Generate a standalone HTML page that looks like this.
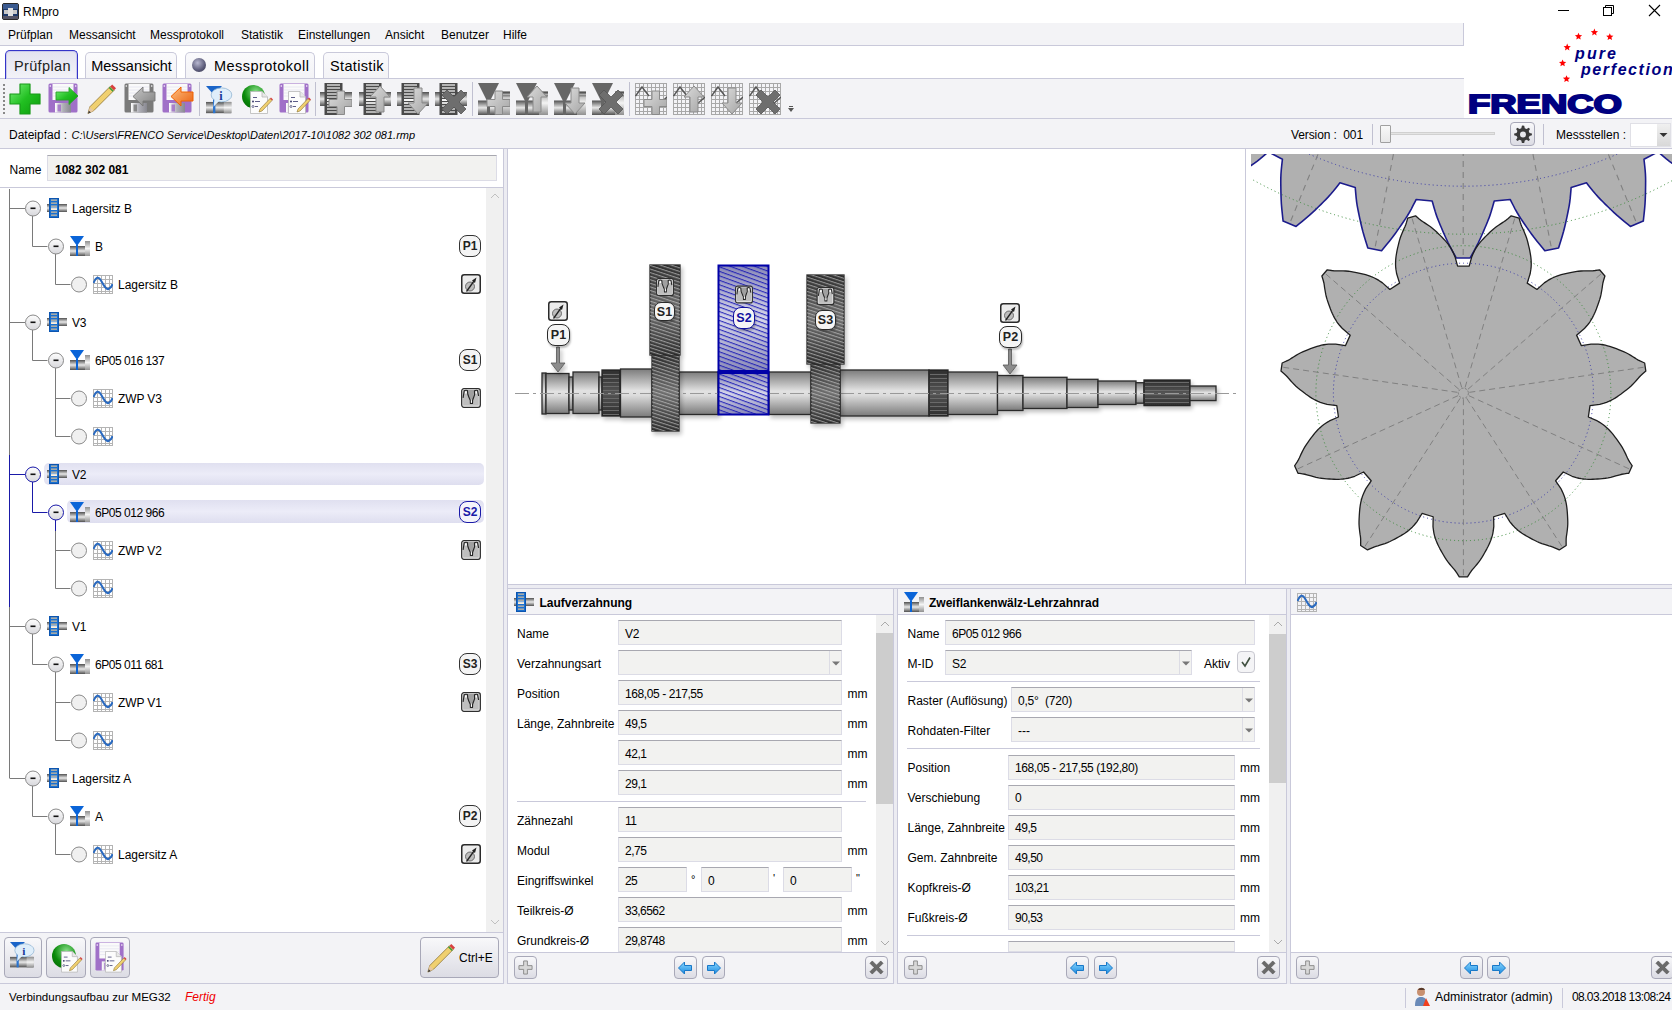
<!DOCTYPE html><html><head><meta charset="utf-8"><title>RMpro</title><style>
*{margin:0;padding:0;box-sizing:border-box}
html,body{width:1672px;height:1010px;overflow:hidden;background:#fff;font-family:"Liberation Sans",sans-serif;font-size:12px;color:#000}
.a{position:absolute}
.t{position:absolute;white-space:nowrap;line-height:1}
.inp{position:absolute;background:#f2f2f0;border:1px solid #dcdce6;border-top:1px solid #a8a8b0;height:25px}
.inp span{position:absolute;left:7px;top:6px;white-space:nowrap}
.hl{position:absolute;height:1px;background:#c8c8d8}
.vl{position:absolute;width:1px;background:#c8c8d8}
.btn{position:absolute;border:1px solid #a8a8b8;border-radius:4px;background:linear-gradient(#f8f8fa,#dcdce4)}
.bd{position:absolute;border:1px solid #333;border-radius:8px;background:#f4f4f4;font-weight:bold;font-size:12px;text-align:center;line-height:20px;color:#222}
.ic{position:absolute;overflow:visible}
</style></head><body>
<div class="a" style="left:0px;top:0px;width:1672px;height:23px;background:#fff"></div>
<svg class="ic" style="left:2px;top:3px" width="17" height="17" viewBox="0 0 17 17">
<rect x="0.5" y="0.5" width="16" height="16" rx="1.5" fill="#1e3a6a" stroke="#2a2a2a"/>
<rect x="1" y="1" width="15" height="5" fill="#3a5a90"/>
<rect x="2" y="7" width="13" height="4" fill="#c8c8c8"/><rect x="6" y="5" width="5" height="8" fill="#e0e0e0"/>
<rect x="1" y="13" width="15" height="3" fill="#556"/>
</svg>
<div class="t" style="left:23px;top:5.8px;font-size:12px;font-weight:normal;font-style:normal;color:#000;">RMpro</div>
<div class="a" style="left:1558px;top:10px;width:11px;height:1px;background:#000"></div>
<svg class="ic" style="left:1602px;top:4px" width="14" height="14" viewBox="0 0 14 14"><rect x="1.5" y="3.5" width="8" height="8" fill="none" stroke="#000"/><path d="M3.5 3.5V1.5H11.5V9.5H9.5" fill="none" stroke="#000"/></svg>
<svg class="ic" style="left:1648px;top:4px" width="13" height="13" viewBox="0 0 13 13"><path d="M1 1L12 12M12 1L1 12" stroke="#000" stroke-width="1.1"/></svg>
<div class="a" style="left:0px;top:23px;width:1463px;height:22px;background:#f3f3f6"></div>
<div class="a" style="left:0px;top:45px;width:1463px;height:1px;background:#c9c9da"></div>
<div class="t" style="left:8px;top:28.8px;font-size:12px;font-weight:normal;font-style:normal;color:#000;">Prüfplan</div>
<div class="t" style="left:69px;top:28.8px;font-size:12px;font-weight:normal;font-style:normal;color:#000;">Messansicht</div>
<div class="t" style="left:150px;top:28.8px;font-size:12px;font-weight:normal;font-style:normal;color:#000;">Messprotokoll</div>
<div class="t" style="left:241px;top:28.8px;font-size:12px;font-weight:normal;font-style:normal;color:#000;">Statistik</div>
<div class="t" style="left:298px;top:28.8px;font-size:12px;font-weight:normal;font-style:normal;color:#000;">Einstellungen</div>
<div class="t" style="left:385px;top:28.8px;font-size:12px;font-weight:normal;font-style:normal;color:#000;">Ansicht</div>
<div class="t" style="left:441px;top:28.8px;font-size:12px;font-weight:normal;font-style:normal;color:#000;">Benutzer</div>
<div class="t" style="left:503px;top:28.8px;font-size:12px;font-weight:normal;font-style:normal;color:#000;">Hilfe</div>
<div class="a" style="left:1463px;top:23px;width:1px;height:96px;background:#c9c9da"></div>
<div class="a" style="left:1464px;top:23px;width:208px;height:96px;background:#fff"></div>
<div class="a" style="left:0px;top:46px;width:1464px;height:33px;background:#fff"></div>
<div class="a" style="left:0px;top:78px;width:1464px;height:1px;background:#c9c9da"></div>
<div class="a" style="left:5px;top:50px;width:73px;height:29px;border:1px solid #3434c8;border-bottom:none;border-radius:5px 5px 0 0;background:linear-gradient(#e2e2f0,#f3f3f8);box-shadow:inset 0 0 0 1px #c8c8ec"></div>
<div class="a" style="left:85px;top:52px;width:92px;height:26px;border:1px solid #c9c9da;border-bottom:none;border-radius:5px 5px 0 0;background:linear-gradient(#fafafc,#f3f3f6)"></div>
<div class="a" style="left:185px;top:52px;width:130px;height:26px;border:1px solid #c9c9da;border-bottom:none;border-radius:5px 5px 0 0;background:linear-gradient(#fafafc,#f3f3f6)"></div>
<div class="a" style="left:323px;top:52px;width:66px;height:26px;border:1px solid #c9c9da;border-bottom:none;border-radius:5px 5px 0 0;background:linear-gradient(#fafafc,#f3f3f6)"></div>
<div class="t" style="left:14px;top:58.5px;font-size:14.5px;font-weight:normal;font-style:normal;color:#222;letter-spacing:0.35px">Prüfplan</div>
<div class="t" style="left:91.2px;top:58.5px;font-size:14.5px;font-weight:normal;font-style:normal;color:#000;">Messansicht</div>
<div class="t" style="left:214px;top:58.5px;font-size:14.5px;font-weight:normal;font-style:normal;color:#000;letter-spacing:0.45px">Messprotokoll</div>
<div class="t" style="left:330px;top:58.5px;font-size:14.5px;font-weight:normal;font-style:normal;color:#000;letter-spacing:0.35px">Statistik</div>
<div class="a" style="left:192px;top:58px;width:14px;height:14px;border-radius:7px;background:radial-gradient(circle at 40% 35%,#b8b8d0,#5a5a78 60%,#33334a)"></div>
<div class="a" style="left:0px;top:79px;width:1464px;height:39px;background:#f3f3f6"></div>
<div class="a" style="left:0px;top:118px;width:1672px;height:1px;background:#c9c9da"></div>
<div class="a" style="left:3px;top:84px;width:2px;height:30px;background:repeating-linear-gradient(#888 0 2px,transparent 2px 4px)"></div>
<div class="a" style="left:199px;top:82px;width:1px;height:34px;background:#c0c0d0"></div>
<div class="a" style="left:315px;top:82px;width:1px;height:34px;background:#c0c0d0"></div>
<div class="a" style="left:472px;top:82px;width:1px;height:34px;background:#c0c0d0"></div>
<div class="a" style="left:629px;top:82px;width:1px;height:34px;background:#c0c0d0"></div>
<div class="a" style="left:789px;top:106px;width:4px;height:1px;background:#555"></div>
<svg class="ic" style="left:787px;top:107px" width="8" height="6"><path d="M1 1H7L4 5Z" fill="#555"/></svg>
<div class="a" style="left:0px;top:119px;width:1672px;height:29px;background:#f3f3f6"></div>
<div class="a" style="left:0px;top:148px;width:1672px;height:1px;background:#c9c9da"></div>
<div class="t" style="left:9px;top:128.8px;font-size:12px;font-weight:normal;font-style:normal;color:#000;">Dateipfad :</div>
<div class="t" style="left:71.5px;top:129.8px;font-size:11px;font-weight:normal;font-style:italic;color:#000;">C:\Users\FRENCO Service\Desktop\Daten\2017-10\1082 302 081.rmp</div>
<div class="t" style="left:1291px;top:128.8px;font-size:12px;font-weight:normal;font-style:normal;color:#000;;letter-spacing:-0.098px">Version :&nbsp; 001</div>
<div class="a" style="left:1372px;top:124px;width:1px;height:21px;background:#c0c0d0"></div>
<div class="a" style="left:1390px;top:132px;width:105px;height:3px;background:#e4e4e4;border:1px solid #d0d0d0"></div>
<div class="a" style="left:1380px;top:125px;width:11px;height:18px;background:linear-gradient(#f8f8f8,#e8e8e8);border:1px solid #a0a0a0;border-radius:1px"></div>
<div class="a" style="left:1543px;top:124px;width:1px;height:21px;background:#c0c0d0"></div>
<div class="t" style="left:1556px;top:128.8px;font-size:12px;font-weight:normal;font-style:normal;color:#000;">Messstellen :</div>
<div class="a" style="left:1630px;top:123px;width:41px;height:24px;background:#fff;border:1px solid #e0e0e6"></div>
<div class="a" style="left:1657px;top:124px;width:13px;height:22px;background:linear-gradient(#f0f0f0,#d8d8d8)"></div>
<svg class="ic" style="left:1659px;top:132px" width="9" height="6"><path d="M0.5 1H8.5L4.5 5Z" fill="#333"/></svg>
<svg class="ic" style="left:1464px;top:23px" width="207" height="95" viewBox="0 0 207 95">
<polygon points="114.50,9.70 115.51,12.12 118.11,12.33 116.13,14.03 116.73,16.57 114.50,15.21 112.27,16.57 112.87,14.03 110.89,12.33 113.49,12.12" fill="#f00"/><polygon points="130.40,5.60 131.41,8.02 134.01,8.23 132.03,9.93 132.63,12.47 130.40,11.11 128.17,12.47 128.77,9.93 126.79,8.23 129.39,8.02" fill="#f00"/><polygon points="145.80,10.20 146.81,12.62 149.41,12.83 147.43,14.53 148.03,17.07 145.80,15.71 143.57,17.07 144.17,14.53 142.19,12.83 144.79,12.62" fill="#f00"/><polygon points="103.20,20.60 104.21,23.02 106.81,23.23 104.83,24.93 105.43,27.47 103.20,26.11 100.97,27.47 101.57,24.93 99.59,23.23 102.19,23.02" fill="#f00"/><polygon points="98.60,36.40 99.61,38.82 102.21,39.03 100.23,40.73 100.83,43.27 98.60,41.91 96.37,43.27 96.97,40.73 94.99,39.03 97.59,38.82" fill="#f00"/><polygon points="102.50,52.20 103.51,54.62 106.11,54.83 104.13,56.53 104.73,59.07 102.50,57.71 100.27,59.07 100.87,56.53 98.89,54.83 101.49,54.62" fill="#f00"/>
<text x="111" y="35.7" font-family="Liberation Sans" font-weight="bold" font-style="italic" font-size="16" fill="#000080" textLength="41" lengthAdjust="spacing">pure</text>
<text x="117" y="51.5" font-family="Liberation Sans" font-weight="bold" font-style="italic" font-size="16" fill="#000080" letter-spacing="1.6">perfection</text>
<text x="4" y="90.2" font-family="Liberation Sans" font-weight="900" font-size="25.5" fill="#000080" textLength="154" lengthAdjust="spacingAndGlyphs" stroke="#000080" stroke-width="1.8">FRENCO</text>
</svg>

<svg width="0" height="0" style="position:absolute">
<defs>
<linearGradient id="gShaft" x1="0" y1="0" x2="0" y2="1"><stop offset="0" stop-color="#505050"/><stop offset="0.5" stop-color="#e8e8e8"/><stop offset="1" stop-color="#505050"/></linearGradient>
<linearGradient id="gShaftL" x1="0" y1="0" x2="0" y2="1"><stop offset="0" stop-color="#909090"/><stop offset="0.5" stop-color="#f4f4f4"/><stop offset="1" stop-color="#909090"/></linearGradient>
<linearGradient id="gCirc" x1="0" y1="0" x2="0" y2="1"><stop offset="0" stop-color="#fdfdfd"/><stop offset="1" stop-color="#d8d8dc"/></linearGradient>
<symbol id="iGear" viewBox="0 0 20 20">
<rect x="0" y="6" width="20" height="8" fill="url(#gShaft)"/>
<rect x="2" y="0" width="10" height="20" fill="#0c55b0"/>
<rect x="3" y="1" width="8" height="18" fill="#1a70d0"/>
<g fill="#c8b8a0"><rect x="4" y="1.5" width="6" height="1.3"/><rect x="4" y="4.5" width="6" height="1.3"/><rect x="4" y="7.5" width="6" height="1.3"/><rect x="4" y="13.5" width="6" height="1.3"/><rect x="4" y="16.5" width="6" height="1.3"/></g>
<g fill="#fff0dc"><rect x="4" y="9.5" width="6" height="1.3"/><rect x="4" y="10.7" width="6" height="1.3"/></g>
</symbol>
<symbol id="iV" viewBox="0 0 20 20">
<rect x="0" y="10" width="15" height="10" fill="url(#gShaft)"/>
<g fill="#bbb"><rect x="15" y="5" width="5" height="15" fill="url(#gShaftL)"/></g>
<path d="M0 0H14L7 10Z" fill="#0a64d8"/>
<rect x="6" y="9" width="2" height="11" fill="#0a64d8"/>
</symbol>
<symbol id="iSine" viewBox="0 0 20 20">
<g stroke="#b4b4b4" stroke-width="1"><path d="M0.5 1V20M4.5 1V20M8.5 1V20M12.5 1V20M16.5 1V20M19.5 1V20M0 1.5H20M0 5.5H20M0 9.5H20M0 13.5H20M0 17.5H20M0 19.5H20"/></g>
<path d="M0.5 9C3 3 5.5 2 8 6.5S13 16 15.5 15S19 12 19.5 10" fill="none" stroke="#2a6ac0" stroke-width="2"/>
</symbol>
<symbol id="iDia" viewBox="0 0 20 20">
<rect x="0.75" y="0.75" width="18.5" height="18.5" rx="2.5" fill="#ececec" stroke="#2a2a2a" stroke-width="1.5"/>
<circle cx="9" cy="12.5" r="4.5" fill="#bdbdbd" stroke="#555" stroke-width="0.8"/>
<path d="M5.5 17.5L13 7" stroke="#222" stroke-width="1.3"/><path d="M15.5 3.5L11 6.5L14 9Z" fill="#222"/>
</symbol>
<symbol id="iVprof" viewBox="0 0 20 20">
<rect x="0.7" y="0.7" width="18.6" height="18.6" rx="2.2" fill="#f6f6f6" stroke="#2e2e2e" stroke-width="1.3"/>
<rect x="2.1" y="2.1" width="15.7" height="15.6" fill="#bebebe"/>
<path d="M6.5 2.1H13.4L12 11H8Z" fill="#a0a0a0"/>
<path d="M2.1 9.8L3.2 2.8Q4.8 1.8 6.4 2.6L6.8 6.3L7.8 9L8.8 11.4L9.3 12.2L9.4 15.4H11.5L11.6 12.2L12.6 9.5L13.6 6.8L13.5 2.8Q15 1.8 16.6 2.6L17.6 8" fill="none" stroke="#262626" stroke-width="1.15" stroke-linejoin="round"/>
<path d="M3.8 5.6L4.4 3.2H5.6L5.8 5.6Z" fill="#fff"/><path d="M14.5 5.6L14.6 3.2H15.7L16.1 5.6Z" fill="#fff"/><rect x="9.9" y="12.4" width="1.1" height="2.4" fill="#fff"/>
</symbol>
</defs></svg>

<div class="a" style="left:0px;top:149px;width:503px;height:783px;background:#fff"></div>
<div class="t" style="left:9.5px;top:163.8px;font-size:12px;font-weight:normal;font-style:normal;color:#000;">Name</div>
<div class="inp" style="left:47px;top:155px;width:450px;height:26px"></div>
<div class="t" style="left:55px;top:163.8px;font-size:12px;font-weight:bold;font-style:normal;color:#000;">1082 302 081</div>
<div class="a" style="left:0px;top:187px;width:503px;height:1px;background:#c9c9da"></div>
<div class="a" style="left:486px;top:188px;width:17px;height:744px;background:#f0f0f0"></div>
<svg class="ic" style="left:490px;top:193px" width="10" height="6"><path d="M1 5L5 1L9 5" fill="none" stroke="#c0c0c0" stroke-width="1"/></svg>
<svg class="ic" style="left:490px;top:919px" width="10" height="6"><path d="M1 1L5 5L9 1" fill="none" stroke="#c0c0c0" stroke-width="1"/></svg>
<div class="a" style="left:503px;top:149px;width:1px;height:835px;background:#c9c9da"></div>
<div class="a" style="left:504px;top:149px;width:3px;height:835px;background:#ececf2"></div>
<div class="a" style="left:507px;top:149px;width:1px;height:835px;background:#c9c9da"></div>
<div class="a" style="left:44px;top:463px;width:440px;height:22px;border-radius:5px;background:linear-gradient(#e0e0f0,#ececf8 50%,#dedeef)"></div>
<div class="a" style="left:67px;top:500px;width:417px;height:23px;border-radius:5px;background:linear-gradient(#e0e0f0,#ececf8 50%,#dedeef)"></div>
<svg class="ic" style="left:0;top:188px" width="120" height="700" viewBox="0 188 120 700"><path d="M9.5 189L9.5 455" stroke="#7a7a7a" stroke-width="1" fill="none"/><path d="M9.5 455L9.5 607" stroke="#1a1aa8" stroke-width="1" fill="none"/><path d="M9.5 607L9.5 778.5" stroke="#7a7a7a" stroke-width="1" fill="none"/><path d="M10 208.5L25 208.5" stroke="#7a7a7a" stroke-width="1" fill="none"/><path d="M10 322.5L25 322.5" stroke="#7a7a7a" stroke-width="1" fill="none"/><path d="M10 474.5L25 474.5" stroke="#1a1aa8" stroke-width="1" fill="none"/><path d="M10 626.5L25 626.5" stroke="#7a7a7a" stroke-width="1" fill="none"/><path d="M10 778.5L25 778.5" stroke="#7a7a7a" stroke-width="1" fill="none"/><path d="M32.5 216L32.5 246.5" stroke="#7a7a7a" stroke-width="1" fill="none"/><path d="M32.5 246.5L47.5 246.5" stroke="#7a7a7a" stroke-width="1" fill="none"/><path d="M55.5 254L55.5 284.5" stroke="#7a7a7a" stroke-width="1" fill="none"/><path d="M55.5 284.5L70.5 284.5" stroke="#7a7a7a" stroke-width="1" fill="none"/><path d="M32.5 330L32.5 360.5" stroke="#7a7a7a" stroke-width="1" fill="none"/><path d="M32.5 360.5L47.5 360.5" stroke="#7a7a7a" stroke-width="1" fill="none"/><path d="M55.5 368L55.5 436.5" stroke="#7a7a7a" stroke-width="1" fill="none"/><path d="M55.5 398.5L70.5 398.5" stroke="#7a7a7a" stroke-width="1" fill="none"/><path d="M55.5 436.5L70.5 436.5" stroke="#7a7a7a" stroke-width="1" fill="none"/><path d="M32.5 482L32.5 512.5" stroke="#1a1aa8" stroke-width="1" fill="none"/><path d="M32.5 512.5L47.5 512.5" stroke="#1a1aa8" stroke-width="1" fill="none"/><path d="M55.5 520L55.5 531" stroke="#1a1aa8" stroke-width="1" fill="none"/><path d="M55.5 531L55.5 588.5" stroke="#7a7a7a" stroke-width="1" fill="none"/><path d="M55.5 550.5L70.5 550.5" stroke="#7a7a7a" stroke-width="1" fill="none"/><path d="M55.5 588.5L70.5 588.5" stroke="#7a7a7a" stroke-width="1" fill="none"/><path d="M32.5 634L32.5 664.5" stroke="#7a7a7a" stroke-width="1" fill="none"/><path d="M32.5 664.5L47.5 664.5" stroke="#7a7a7a" stroke-width="1" fill="none"/><path d="M55.5 672L55.5 740.5" stroke="#7a7a7a" stroke-width="1" fill="none"/><path d="M55.5 702.5L70.5 702.5" stroke="#7a7a7a" stroke-width="1" fill="none"/><path d="M55.5 740.5L70.5 740.5" stroke="#7a7a7a" stroke-width="1" fill="none"/><path d="M32.5 786L32.5 816.5" stroke="#7a7a7a" stroke-width="1" fill="none"/><path d="M32.5 816.5L47.5 816.5" stroke="#7a7a7a" stroke-width="1" fill="none"/><path d="M55.5 824L55.5 854.5" stroke="#7a7a7a" stroke-width="1" fill="none"/><path d="M55.5 854.5L70.5 854.5" stroke="#7a7a7a" stroke-width="1" fill="none"/><circle cx="33" cy="208.5" r="7.5" fill="url(#gCirc)" stroke="#8a8a8a" stroke-width="1"/><rect x="30.5" y="207.5" width="5" height="1.6" fill="#111"/><circle cx="56" cy="246.5" r="7.5" fill="url(#gCirc)" stroke="#8a8a8a" stroke-width="1"/><rect x="53.5" y="245.5" width="5" height="1.6" fill="#111"/><circle cx="79" cy="284.5" r="7.5" fill="#f0f0f0" stroke="#8a8a8a" stroke-width="1"/><circle cx="33" cy="322.5" r="7.5" fill="url(#gCirc)" stroke="#8a8a8a" stroke-width="1"/><rect x="30.5" y="321.5" width="5" height="1.6" fill="#111"/><circle cx="56" cy="360.5" r="7.5" fill="url(#gCirc)" stroke="#8a8a8a" stroke-width="1"/><rect x="53.5" y="359.5" width="5" height="1.6" fill="#111"/><circle cx="79" cy="398.5" r="7.5" fill="#f0f0f0" stroke="#8a8a8a" stroke-width="1"/><circle cx="79" cy="436.5" r="7.5" fill="#f0f0f0" stroke="#8a8a8a" stroke-width="1"/><circle cx="33" cy="474.5" r="7.5" fill="url(#gCirc)" stroke="#1a1aa8" stroke-width="1"/><rect x="30.5" y="473.5" width="5" height="1.6" fill="#111"/><circle cx="56" cy="512.5" r="7.5" fill="url(#gCirc)" stroke="#1a1aa8" stroke-width="1"/><rect x="53.5" y="511.5" width="5" height="1.6" fill="#111"/><circle cx="79" cy="550.5" r="7.5" fill="#f0f0f0" stroke="#8a8a8a" stroke-width="1"/><circle cx="79" cy="588.5" r="7.5" fill="#f0f0f0" stroke="#8a8a8a" stroke-width="1"/><circle cx="33" cy="626.5" r="7.5" fill="url(#gCirc)" stroke="#8a8a8a" stroke-width="1"/><rect x="30.5" y="625.5" width="5" height="1.6" fill="#111"/><circle cx="56" cy="664.5" r="7.5" fill="url(#gCirc)" stroke="#8a8a8a" stroke-width="1"/><rect x="53.5" y="663.5" width="5" height="1.6" fill="#111"/><circle cx="79" cy="702.5" r="7.5" fill="#f0f0f0" stroke="#8a8a8a" stroke-width="1"/><circle cx="79" cy="740.5" r="7.5" fill="#f0f0f0" stroke="#8a8a8a" stroke-width="1"/><circle cx="33" cy="778.5" r="7.5" fill="url(#gCirc)" stroke="#8a8a8a" stroke-width="1"/><rect x="30.5" y="777.5" width="5" height="1.6" fill="#111"/><circle cx="56" cy="816.5" r="7.5" fill="url(#gCirc)" stroke="#8a8a8a" stroke-width="1"/><rect x="53.5" y="815.5" width="5" height="1.6" fill="#111"/><circle cx="79" cy="854.5" r="7.5" fill="#f0f0f0" stroke="#8a8a8a" stroke-width="1"/></svg>
<svg class="ic" style="left:47px;top:198px" width="20" height="20"><use href="#iGear"/></svg>
<div class="t" style="left:72px;top:202.8px;font-size:12px;font-weight:normal;font-style:normal;color:#000;">Lagersitz B</div>
<svg class="ic" style="left:70px;top:236px" width="20" height="20"><use href="#iV"/></svg>
<div class="t" style="left:95px;top:240.8px;font-size:12px;font-weight:normal;font-style:normal;color:#000;">B</div>
<div class="bd" style="left:459px;top:235px;width:22px;height:22px;">P1</div>
<svg class="ic" style="left:93px;top:274px" width="20" height="20"><use href="#iSine"/></svg>
<div class="t" style="left:118px;top:278.8px;font-size:12px;font-weight:normal;font-style:normal;color:#000;">Lagersitz B</div>
<svg class="ic" style="left:461px;top:274px" width="20" height="20"><use href="#iDia"/></svg>
<svg class="ic" style="left:47px;top:312px" width="20" height="20"><use href="#iGear"/></svg>
<div class="t" style="left:72px;top:316.8px;font-size:12px;font-weight:normal;font-style:normal;color:#000;;letter-spacing:-0.310px">V3</div>
<svg class="ic" style="left:70px;top:350px" width="20" height="20"><use href="#iV"/></svg>
<div class="t" style="left:95px;top:354.8px;font-size:12px;font-weight:normal;font-style:normal;color:#000;;letter-spacing:-0.465px">6P05 016 137</div>
<div class="bd" style="left:459px;top:349px;width:22px;height:22px;">S1</div>
<svg class="ic" style="left:93px;top:388px" width="20" height="20"><use href="#iSine"/></svg>
<div class="t" style="left:118px;top:392.8px;font-size:12px;font-weight:normal;font-style:normal;color:#000;;letter-spacing:-0.103px">ZWP V3</div>
<svg class="ic" style="left:461px;top:388px" width="20" height="20"><use href="#iVprof"/></svg>
<svg class="ic" style="left:93px;top:426px" width="20" height="20"><use href="#iSine"/></svg>
<svg class="ic" style="left:47px;top:464px" width="20" height="20"><use href="#iGear"/></svg>
<div class="t" style="left:72px;top:468.8px;font-size:12px;font-weight:normal;font-style:normal;color:#000;;letter-spacing:-0.310px">V2</div>
<svg class="ic" style="left:70px;top:502px" width="20" height="20"><use href="#iV"/></svg>
<div class="t" style="left:95px;top:506.8px;font-size:12px;font-weight:normal;font-style:normal;color:#000;;letter-spacing:-0.465px">6P05 012 966</div>
<div class="bd" style="left:459px;top:501px;width:22px;height:22px;border-color:#1a1aa8;color:#1a1aa8;background:#f4f4fa">S2</div>
<svg class="ic" style="left:93px;top:540px" width="20" height="20"><use href="#iSine"/></svg>
<div class="t" style="left:118px;top:544.8px;font-size:12px;font-weight:normal;font-style:normal;color:#000;;letter-spacing:-0.103px">ZWP V2</div>
<svg class="ic" style="left:461px;top:540px" width="20" height="20"><use href="#iVprof"/></svg>
<svg class="ic" style="left:93px;top:578px" width="20" height="20"><use href="#iSine"/></svg>
<svg class="ic" style="left:47px;top:616px" width="20" height="20"><use href="#iGear"/></svg>
<div class="t" style="left:72px;top:620.8px;font-size:12px;font-weight:normal;font-style:normal;color:#000;;letter-spacing:-0.310px">V1</div>
<svg class="ic" style="left:70px;top:654px" width="20" height="20"><use href="#iV"/></svg>
<div class="t" style="left:95px;top:658.8px;font-size:12px;font-weight:normal;font-style:normal;color:#000;;letter-spacing:-0.465px">6P05 011 681</div>
<div class="bd" style="left:459px;top:653px;width:22px;height:22px;">S3</div>
<svg class="ic" style="left:93px;top:692px" width="20" height="20"><use href="#iSine"/></svg>
<div class="t" style="left:118px;top:696.8px;font-size:12px;font-weight:normal;font-style:normal;color:#000;;letter-spacing:-0.103px">ZWP V1</div>
<svg class="ic" style="left:461px;top:692px" width="20" height="20"><use href="#iVprof"/></svg>
<svg class="ic" style="left:93px;top:730px" width="20" height="20"><use href="#iSine"/></svg>
<svg class="ic" style="left:47px;top:768px" width="20" height="20"><use href="#iGear"/></svg>
<div class="t" style="left:72px;top:772.8px;font-size:12px;font-weight:normal;font-style:normal;color:#000;">Lagersitz A</div>
<svg class="ic" style="left:70px;top:806px" width="20" height="20"><use href="#iV"/></svg>
<div class="t" style="left:95px;top:810.8px;font-size:12px;font-weight:normal;font-style:normal;color:#000;">A</div>
<div class="bd" style="left:459px;top:805px;width:22px;height:22px;">P2</div>
<svg class="ic" style="left:93px;top:844px" width="20" height="20"><use href="#iSine"/></svg>
<div class="t" style="left:118px;top:848.8px;font-size:12px;font-weight:normal;font-style:normal;color:#000;">Lagersitz A</div>
<svg class="ic" style="left:461px;top:844px" width="20" height="20"><use href="#iDia"/></svg>
<div class="a" style="left:0px;top:932px;width:503px;height:1px;background:#c9c9da"></div>
<div class="a" style="left:0px;top:933px;width:503px;height:50px;background:#f3f3f6"></div>
<div class="a" style="left:0px;top:983px;width:503px;height:1px;background:#c9c9da"></div>
<div class="a" style="left:508px;top:149px;width:737px;height:435px;background:#fff"></div>
<div class="a" style="left:1245px;top:149px;width:1px;height:435px;background:#c9c9da"></div>
<div class="a" style="left:1246px;top:149px;width:426px;height:435px;background:#fff"></div>
<svg class="ic" style="left:1251px;top:154px;overflow:hidden" width="421" height="430" viewBox="1251 154 421 430">
<path d="M1159.70 63.92 L1159.70 63.92 L1158.42 66.27 L1156.58 69.63 L1154.57 73.40 L1152.79 76.95 L1151.34 80.12 L1150.02 83.24 L1148.73 86.42 L1147.41 89.78 L1146.00 93.36 L1144.58 97.10 L1143.16 100.96 L1141.81 104.88 L1140.41 109.30 L1139.00 114.08 L1137.76 118.38 L1136.89 121.38 L1146.87 131.21 L1149.85 130.29 L1154.14 128.99 L1158.90 127.50 L1163.29 126.04 L1167.19 124.62 L1171.03 123.15 L1174.74 121.66 L1178.31 120.21 L1181.65 118.83 L1184.81 117.50 L1187.90 116.12 L1191.05 114.63 L1194.57 112.79 L1198.31 110.72 L1201.65 108.83 L1203.97 107.52 L1203.97 107.52 L1216.41 117.59 L1216.41 117.59 L1215.61 120.13 L1214.46 123.79 L1213.21 127.88 L1212.15 131.71 L1211.34 135.10 L1210.64 138.41 L1209.99 141.78 L1209.34 145.33 L1208.66 149.12 L1207.98 153.06 L1207.34 157.12 L1206.77 161.24 L1206.25 165.83 L1205.79 170.80 L1205.40 175.26 L1205.13 178.37 L1216.82 186.08 L1219.57 184.61 L1223.53 182.50 L1227.90 180.12 L1231.93 177.84 L1235.49 175.70 L1238.97 173.51 L1242.33 171.33 L1245.54 169.22 L1248.55 167.22 L1251.40 165.30 L1254.17 163.36 L1256.96 161.28 L1260.06 158.80 L1263.33 156.05 L1266.24 153.54 L1268.27 151.81 L1268.27 151.81 L1282.42 159.28 L1282.42 159.28 L1282.13 161.94 L1281.70 165.75 L1281.27 170.00 L1280.97 173.96 L1280.83 177.44 L1280.78 180.83 L1280.80 184.26 L1280.85 187.87 L1280.91 191.72 L1281.01 195.72 L1281.16 199.83 L1281.39 203.97 L1281.78 208.59 L1282.28 213.54 L1282.76 218.00 L1283.10 221.10 L1296.06 226.41 L1298.47 224.44 L1301.94 221.60 L1305.78 218.42 L1309.29 215.40 L1312.37 212.61 L1315.36 209.80 L1318.23 207.01 L1320.98 204.31 L1323.55 201.77 L1325.97 199.34 L1328.31 196.90 L1330.65 194.32 L1333.21 191.28 L1335.89 187.95 L1338.26 184.94 L1339.92 182.84 L1339.92 182.84 L1355.24 187.44 L1355.24 187.44 L1355.47 190.10 L1355.79 193.93 L1356.19 198.18 L1356.65 202.12 L1357.19 205.57 L1357.80 208.90 L1358.48 212.26 L1359.22 215.80 L1360.03 219.56 L1360.89 223.47 L1361.84 227.46 L1362.87 231.49 L1364.14 235.94 L1365.59 240.71 L1366.92 244.99 L1367.85 247.96 L1381.59 250.67 L1383.58 248.27 L1386.44 244.81 L1389.59 240.95 L1392.45 237.31 L1394.93 233.98 L1397.32 230.64 L1399.60 227.35 L1401.77 224.18 L1403.80 221.19 L1405.71 218.33 L1407.53 215.48 L1409.33 212.50 L1411.26 209.03 L1413.24 205.24 L1414.99 201.82 L1416.21 199.45 L1416.21 199.45 L1432.13 201.00 L1432.13 201.00 L1432.87 203.57 L1433.92 207.26 L1435.13 211.35 L1436.35 215.13 L1437.54 218.41 L1438.79 221.56 L1440.10 224.73 L1441.52 228.05 L1443.03 231.59 L1444.64 235.25 L1446.34 238.99 L1448.13 242.74 L1450.23 246.86 L1452.58 251.26 L1454.71 255.20 L1456.20 257.95 L1470.20 257.95 L1471.69 255.20 L1473.82 251.26 L1476.17 246.86 L1478.27 242.74 L1480.06 238.99 L1481.76 235.25 L1483.37 231.59 L1484.88 228.05 L1486.30 224.73 L1487.61 221.56 L1488.86 218.41 L1490.05 215.13 L1491.27 211.35 L1492.48 207.26 L1493.53 203.57 L1494.27 201.00 L1494.27 201.00 L1510.19 199.45 L1510.19 199.45 L1511.41 201.82 L1513.16 205.24 L1515.14 209.03 L1517.07 212.50 L1518.87 215.48 L1520.69 218.33 L1522.60 221.19 L1524.63 224.18 L1526.80 227.35 L1529.08 230.64 L1531.47 233.98 L1533.95 237.31 L1536.81 240.95 L1539.96 244.81 L1542.82 248.27 L1544.81 250.67 L1558.55 247.96 L1559.48 244.99 L1560.81 240.71 L1562.26 235.94 L1563.53 231.49 L1564.56 227.46 L1565.51 223.47 L1566.37 219.56 L1567.18 215.80 L1567.92 212.26 L1568.60 208.90 L1569.21 205.57 L1569.75 202.12 L1570.21 198.18 L1570.61 193.93 L1570.93 190.10 L1571.16 187.44 L1571.16 187.44 L1586.48 182.84 L1586.48 182.84 L1588.14 184.94 L1590.51 187.95 L1593.19 191.28 L1595.75 194.32 L1598.09 196.90 L1600.43 199.34 L1602.85 201.77 L1605.42 204.31 L1608.17 207.01 L1611.04 209.80 L1614.03 212.61 L1617.11 215.40 L1620.62 218.42 L1624.46 221.60 L1627.93 224.44 L1630.34 226.41 L1643.30 221.10 L1643.64 218.00 L1644.12 213.54 L1644.62 208.59 L1645.01 203.97 L1645.24 199.83 L1645.39 195.72 L1645.49 191.72 L1645.55 187.87 L1645.60 184.26 L1645.62 180.83 L1645.57 177.44 L1645.43 173.96 L1645.13 170.00 L1644.70 165.75 L1644.27 161.94 L1643.98 159.28 L1643.98 159.28 L1658.13 151.81 L1658.13 151.81 L1660.16 153.54 L1663.07 156.05 L1666.34 158.80 L1669.44 161.28 L1672.23 163.36 L1675.00 165.30 L1677.85 167.22 L1680.86 169.22 L1684.07 171.33 L1687.43 173.51 L1690.91 175.70 L1694.47 177.84 L1698.50 180.12 L1702.87 182.50 L1706.83 184.61 L1709.58 186.08 L1721.27 178.37 L1721.00 175.26 L1720.61 170.80 L1720.15 165.83 L1719.63 161.24 L1719.06 157.12 L1718.42 153.06 L1717.74 149.12 L1717.06 145.33 L1716.41 141.78 L1715.76 138.41 L1715.06 135.10 L1714.25 131.71 L1713.19 127.88 L1711.94 123.79 L1710.79 120.13 L1709.99 117.59 L1709.99 117.59 L1722.43 107.52 L1722.43 107.52 L1724.75 108.83 L1728.09 110.72 L1731.83 112.79 L1735.35 114.63 L1738.50 116.12 L1741.59 117.50 L1744.75 118.83 L1748.09 120.21 L1751.66 121.66 L1755.37 123.15 L1759.21 124.62 L1763.11 126.04 L1767.50 127.50 L1772.26 128.99 L1776.55 130.29 L1779.53 131.21 L1789.51 121.38 L1788.64 118.38 L1787.40 114.08 L1785.99 109.30 L1784.59 104.88 L1783.24 100.96 L1781.82 97.10 L1780.40 93.36 L1778.99 89.78 L1777.67 86.42 L1776.38 83.24 L1775.06 80.12 L1773.61 76.95 L1771.83 73.40 L1769.82 69.63 L1767.98 66.27 L1766.70 63.92 L1766.70 63.92Z" fill="#b0b0b0"/>
<path d="M1433.17 516.75 L1433.00 526.58 L1433.22 528.39 L1433.55 530.97 L1434.00 533.55 L1434.59 535.89 L1435.31 538.23 L1436.10 540.49 L1436.96 542.63 L1437.91 544.70 L1438.91 546.76 L1439.97 548.82 L1441.09 550.88 L1442.30 553.01 L1443.61 555.30 L1445.01 557.66 L1446.49 559.94 L1448.10 562.13 L1449.79 564.23 L1451.39 566.18 L1452.84 567.86 L1454.19 569.39 L1455.51 571.03 L1456.94 573.13 L1458.33 575.34 L1459.30 576.90 L1467.50 576.90 L1468.47 575.34 L1469.86 573.13 L1471.29 571.03 L1472.61 569.39 L1473.96 567.86 L1475.41 566.18 L1477.01 564.23 L1478.70 562.13 L1480.31 559.94 L1481.79 557.66 L1483.19 555.30 L1484.50 553.01 L1485.71 550.88 L1486.83 548.82 L1487.89 546.76 L1488.89 544.70 L1489.84 542.63 L1490.70 540.49 L1491.49 538.23 L1492.21 535.89 L1492.80 533.55 L1493.25 530.97 L1493.58 528.39 L1493.80 526.58 L1493.63 516.75 L1504.76 513.49 L1509.94 521.84 L1511.10 523.25 L1512.77 525.24 L1514.55 527.17 L1516.31 528.82 L1518.18 530.39 L1520.07 531.87 L1521.95 533.20 L1523.86 534.43 L1525.82 535.62 L1527.83 536.78 L1529.88 537.91 L1532.05 539.05 L1534.39 540.26 L1536.85 541.49 L1539.33 542.62 L1541.86 543.58 L1544.42 544.44 L1546.82 545.21 L1548.94 545.85 L1550.91 546.39 L1552.90 547.06 L1555.24 548.06 L1557.61 549.17 L1559.26 549.96 L1566.17 545.52 L1566.14 543.68 L1566.11 541.07 L1566.18 538.53 L1566.40 536.44 L1566.72 534.43 L1567.02 532.23 L1567.32 529.73 L1567.60 527.04 L1567.77 524.33 L1567.78 521.61 L1567.68 518.87 L1567.55 516.24 L1567.41 513.79 L1567.24 511.45 L1567.02 509.14 L1566.75 506.86 L1566.43 504.62 L1566.00 502.35 L1565.44 500.02 L1564.78 497.67 L1564.01 495.38 L1563.00 492.96 L1561.88 490.61 L1561.09 488.97 L1555.63 480.80 L1563.23 472.03 L1572.10 476.26 L1573.83 476.81 L1576.32 477.59 L1578.86 478.25 L1581.23 478.68 L1583.65 479.00 L1586.04 479.22 L1588.35 479.32 L1590.62 479.32 L1592.91 479.26 L1595.22 479.16 L1597.56 478.99 L1600.01 478.78 L1602.63 478.54 L1605.36 478.24 L1608.05 477.85 L1610.71 477.29 L1613.32 476.63 L1615.76 475.98 L1617.89 475.37 L1619.84 474.77 L1621.88 474.25 L1624.38 473.82 L1626.97 473.48 L1628.80 473.25 L1632.21 465.78 L1631.19 464.25 L1629.75 462.07 L1628.43 459.90 L1627.49 458.02 L1626.67 456.15 L1625.74 454.14 L1624.63 451.87 L1623.42 449.46 L1622.10 447.09 L1620.64 444.79 L1619.07 442.54 L1617.54 440.40 L1616.10 438.41 L1614.69 436.54 L1613.26 434.72 L1611.80 432.94 L1610.31 431.23 L1608.72 429.56 L1606.99 427.89 L1605.17 426.27 L1603.28 424.76 L1601.12 423.28 L1598.91 421.91 L1597.36 420.95 L1588.35 417.02 L1590.00 405.54 L1599.75 404.31 L1601.51 403.84 L1604.02 403.14 L1606.51 402.32 L1608.74 401.41 L1610.95 400.37 L1613.08 399.26 L1615.07 398.10 L1616.98 396.87 L1618.88 395.58 L1620.77 394.24 L1622.65 392.84 L1624.59 391.34 L1626.67 389.72 L1628.80 387.99 L1630.85 386.21 L1632.79 384.30 L1634.63 382.33 L1636.33 380.46 L1637.79 378.80 L1639.10 377.24 L1640.54 375.70 L1642.41 373.99 L1644.41 372.30 L1645.82 371.12 L1644.65 362.99 L1642.97 362.26 L1640.57 361.20 L1638.29 360.08 L1636.48 359.01 L1634.78 357.89 L1632.91 356.70 L1630.76 355.39 L1628.43 354.02 L1626.04 352.73 L1623.57 351.60 L1621.03 350.55 L1618.58 349.57 L1616.30 348.68 L1614.10 347.86 L1611.91 347.11 L1609.73 346.41 L1607.55 345.77 L1605.31 345.22 L1602.96 344.75 L1600.54 344.38 L1598.14 344.13 L1595.52 344.05 L1592.92 344.09 L1591.10 344.13 L1581.39 345.69 L1576.58 335.14 L1584.11 328.83 L1585.33 327.48 L1587.07 325.54 L1588.72 323.51 L1590.11 321.53 L1591.40 319.46 L1592.59 317.38 L1593.64 315.32 L1594.59 313.26 L1595.49 311.15 L1596.35 309.00 L1597.17 306.80 L1597.99 304.49 L1598.86 302.00 L1599.73 299.40 L1600.49 296.78 L1601.08 294.14 L1601.57 291.48 L1601.99 288.99 L1602.32 286.80 L1602.58 284.78 L1602.96 282.71 L1603.61 280.26 L1604.38 277.76 L1604.92 276.00 L1599.55 269.80 L1597.73 270.09 L1595.15 270.49 L1592.63 270.79 L1590.52 270.86 L1588.48 270.84 L1586.27 270.85 L1583.75 270.91 L1581.05 271.01 L1578.35 271.23 L1575.65 271.61 L1572.95 272.09 L1570.36 272.60 L1567.96 273.08 L1565.67 273.58 L1563.42 274.13 L1561.20 274.72 L1559.02 275.36 L1556.84 276.11 L1554.61 276.99 L1552.38 277.98 L1550.22 279.07 L1547.97 280.42 L1545.80 281.86 L1544.29 282.88 L1536.98 289.44 L1527.22 283.17 L1530.15 273.79 L1530.45 271.99 L1530.86 269.42 L1531.15 266.81 L1531.24 264.40 L1531.21 261.96 L1531.09 259.57 L1530.86 257.27 L1530.54 255.02 L1530.16 252.76 L1529.72 250.48 L1529.23 248.19 L1528.67 245.80 L1528.05 243.24 L1527.38 240.58 L1526.60 237.97 L1525.67 235.42 L1524.64 232.93 L1523.65 230.61 L1522.74 228.59 L1521.87 226.74 L1521.07 224.80 L1520.29 222.38 L1519.58 219.87 L1519.09 218.09 L1511.22 215.78 L1509.85 217.01 L1507.89 218.74 L1505.93 220.36 L1504.20 221.56 L1502.47 222.64 L1500.62 223.84 L1498.53 225.26 L1496.31 226.81 L1494.15 228.45 L1492.09 230.22 L1490.08 232.09 L1488.18 233.92 L1486.42 235.62 L1484.76 237.28 L1483.17 238.96 L1481.62 240.66 L1480.13 242.37 L1478.70 244.18 L1477.31 246.13 L1475.96 248.17 L1474.73 250.25 L1473.57 252.60 L1472.53 254.98 L1471.81 256.66 L1469.20 266.13 L1457.60 266.13 L1454.99 256.66 L1454.27 254.98 L1453.23 252.60 L1452.07 250.25 L1450.84 248.17 L1449.49 246.13 L1448.10 244.18 L1446.67 242.37 L1445.18 240.66 L1443.63 238.96 L1442.04 237.28 L1440.38 235.62 L1438.62 233.92 L1436.72 232.09 L1434.71 230.22 L1432.65 228.45 L1430.49 226.81 L1428.27 225.26 L1426.18 223.84 L1424.33 222.64 L1422.60 221.56 L1420.87 220.36 L1418.91 218.74 L1416.95 217.01 L1415.58 215.78 L1407.71 218.09 L1407.22 219.87 L1406.51 222.38 L1405.73 224.80 L1404.93 226.74 L1404.06 228.59 L1403.15 230.61 L1402.16 232.93 L1401.13 235.42 L1400.20 237.97 L1399.42 240.58 L1398.75 243.24 L1398.13 245.80 L1397.57 248.19 L1397.08 250.48 L1396.64 252.76 L1396.26 255.02 L1395.94 257.27 L1395.71 259.57 L1395.59 261.96 L1395.56 264.40 L1395.65 266.81 L1395.94 269.42 L1396.35 271.99 L1396.65 273.79 L1399.58 283.17 L1389.82 289.44 L1382.51 282.88 L1381.00 281.86 L1378.83 280.42 L1376.58 279.07 L1374.42 277.98 L1372.19 276.99 L1369.96 276.11 L1367.78 275.36 L1365.60 274.72 L1363.38 274.13 L1361.13 273.58 L1358.84 273.08 L1356.44 272.60 L1353.85 272.09 L1351.15 271.61 L1348.45 271.23 L1345.75 271.01 L1343.05 270.91 L1340.53 270.85 L1338.32 270.84 L1336.28 270.86 L1334.17 270.79 L1331.65 270.49 L1329.07 270.09 L1327.25 269.80 L1321.88 276.00 L1322.42 277.76 L1323.19 280.26 L1323.84 282.71 L1324.22 284.78 L1324.48 286.80 L1324.81 288.99 L1325.23 291.48 L1325.72 294.14 L1326.31 296.78 L1327.07 299.40 L1327.94 302.00 L1328.81 304.49 L1329.63 306.80 L1330.45 309.00 L1331.31 311.15 L1332.21 313.26 L1333.16 315.32 L1334.21 317.38 L1335.40 319.46 L1336.69 321.53 L1338.08 323.51 L1339.73 325.54 L1341.47 327.48 L1342.69 328.83 L1350.22 335.14 L1345.41 345.69 L1335.70 344.13 L1333.88 344.09 L1331.28 344.05 L1328.66 344.13 L1326.26 344.38 L1323.84 344.75 L1321.49 345.22 L1319.25 345.77 L1317.07 346.41 L1314.89 347.11 L1312.70 347.86 L1310.50 348.68 L1308.22 349.57 L1305.77 350.55 L1303.23 351.60 L1300.76 352.73 L1298.37 354.02 L1296.04 355.39 L1293.89 356.70 L1292.02 357.89 L1290.32 359.01 L1288.51 360.08 L1286.23 361.20 L1283.83 362.26 L1282.15 362.99 L1280.98 371.12 L1282.39 372.30 L1284.39 373.99 L1286.26 375.70 L1287.70 377.24 L1289.01 378.80 L1290.47 380.46 L1292.17 382.33 L1294.01 384.30 L1295.95 386.21 L1298.00 387.99 L1300.13 389.72 L1302.21 391.34 L1304.15 392.84 L1306.03 394.24 L1307.92 395.58 L1309.82 396.87 L1311.73 398.10 L1313.72 399.26 L1315.85 400.37 L1318.06 401.41 L1320.29 402.32 L1322.78 403.14 L1325.29 403.84 L1327.05 404.31 L1336.80 405.54 L1338.45 417.02 L1329.44 420.95 L1327.89 421.91 L1325.68 423.28 L1323.52 424.76 L1321.63 426.27 L1319.81 427.89 L1318.08 429.56 L1316.49 431.23 L1315.00 432.94 L1313.54 434.72 L1312.11 436.54 L1310.70 438.41 L1309.26 440.40 L1307.73 442.54 L1306.16 444.79 L1304.70 447.09 L1303.38 449.46 L1302.17 451.87 L1301.06 454.14 L1300.13 456.15 L1299.31 458.02 L1298.37 459.90 L1297.05 462.07 L1295.61 464.25 L1294.59 465.78 L1298.00 473.25 L1299.83 473.48 L1302.42 473.82 L1304.92 474.25 L1306.96 474.77 L1308.91 475.37 L1311.04 475.98 L1313.48 476.63 L1316.09 477.29 L1318.75 477.85 L1321.44 478.24 L1324.17 478.54 L1326.79 478.78 L1329.24 478.99 L1331.58 479.16 L1333.89 479.26 L1336.18 479.32 L1338.45 479.32 L1340.76 479.22 L1343.15 479.00 L1345.57 478.68 L1347.94 478.25 L1350.48 477.59 L1352.97 476.81 L1354.70 476.26 L1363.57 472.03 L1371.17 480.80 L1365.71 488.97 L1364.92 490.61 L1363.80 492.96 L1362.79 495.38 L1362.02 497.67 L1361.36 500.02 L1360.80 502.35 L1360.37 504.62 L1360.05 506.86 L1359.78 509.14 L1359.56 511.45 L1359.39 513.79 L1359.25 516.24 L1359.12 518.87 L1359.02 521.61 L1359.03 524.33 L1359.20 527.04 L1359.48 529.73 L1359.78 532.23 L1360.08 534.43 L1360.40 536.44 L1360.62 538.53 L1360.69 541.07 L1360.66 543.68 L1360.63 545.52 L1367.54 549.96 L1369.19 549.17 L1371.56 548.06 L1373.90 547.06 L1375.89 546.39 L1377.86 545.85 L1379.98 545.21 L1382.38 544.44 L1384.94 543.58 L1387.47 542.62 L1389.95 541.49 L1392.41 540.26 L1394.75 539.05 L1396.92 537.91 L1398.97 536.78 L1400.98 535.62 L1402.94 534.43 L1404.85 533.20 L1406.73 531.87 L1408.62 530.39 L1410.49 528.82 L1412.25 527.17 L1414.03 525.24 L1415.70 523.25 L1416.86 521.84 L1422.04 513.49Z" fill="#b0b0b0"/>
<circle cx="1463.2" cy="-200.0" r="386.2" fill="none" stroke="#3a3aa8" stroke-width="1" stroke-dasharray="1 3"/>
<circle cx="1463.2" cy="-200.0" r="434.2" fill="none" stroke="#3a8a3a" stroke-width="1" stroke-dasharray="1 3"/>
<circle cx="1463.4" cy="393.2" r="130" fill="none" stroke="#3a3aa8" stroke-width="1" stroke-dasharray="1 3"/>
<circle cx="1463.4" cy="393.2" r="147.5" fill="none" stroke="#3a8a3a" stroke-width="1" stroke-dasharray="1 3"/>
<path d="M1217.62 49.38L1141.84 126.33 M1270.43 92.13L1210.95 182.27 M1330.50 123.87L1289.56 223.81 M1395.58 143.41L1374.71 249.37 M1463.20 150.00L1463.20 258.00 M1530.82 143.41L1551.69 249.37 M1595.90 123.87L1636.84 223.81 M1655.97 92.13L1715.45 182.27 M1708.78 49.38L1784.56 126.33" stroke="#808080" stroke-width="1.1" stroke-dasharray="6 5" fill="none"/>
<path d="M1463.40 399.20L1463.40 577.20 M1466.64 398.25L1562.88 547.99 M1468.86 395.69L1630.77 469.64 M1469.34 392.35L1645.53 367.01 M1467.93 389.27L1602.46 272.71 M1465.09 387.44L1515.24 216.65 M1461.71 387.44L1411.56 216.65 M1458.87 389.27L1324.34 272.71 M1457.46 392.35L1281.27 367.01 M1457.94 395.69L1296.03 469.64 M1460.16 398.25L1363.92 547.99" stroke="#808080" stroke-width="1" stroke-dasharray="6 4" fill="none"/>
<circle cx="1463.4" cy="393.2" r="5" fill="none" stroke="#7a7a7a" stroke-width="1" stroke-dasharray="2 1.5"/>
<path d="M1159.70 63.92 L1159.70 63.92 L1158.42 66.27 L1156.58 69.63 L1154.57 73.40 L1152.79 76.95 L1151.34 80.12 L1150.02 83.24 L1148.73 86.42 L1147.41 89.78 L1146.00 93.36 L1144.58 97.10 L1143.16 100.96 L1141.81 104.88 L1140.41 109.30 L1139.00 114.08 L1137.76 118.38 L1136.89 121.38 L1146.87 131.21 L1149.85 130.29 L1154.14 128.99 L1158.90 127.50 L1163.29 126.04 L1167.19 124.62 L1171.03 123.15 L1174.74 121.66 L1178.31 120.21 L1181.65 118.83 L1184.81 117.50 L1187.90 116.12 L1191.05 114.63 L1194.57 112.79 L1198.31 110.72 L1201.65 108.83 L1203.97 107.52 L1203.97 107.52 L1216.41 117.59 L1216.41 117.59 L1215.61 120.13 L1214.46 123.79 L1213.21 127.88 L1212.15 131.71 L1211.34 135.10 L1210.64 138.41 L1209.99 141.78 L1209.34 145.33 L1208.66 149.12 L1207.98 153.06 L1207.34 157.12 L1206.77 161.24 L1206.25 165.83 L1205.79 170.80 L1205.40 175.26 L1205.13 178.37 L1216.82 186.08 L1219.57 184.61 L1223.53 182.50 L1227.90 180.12 L1231.93 177.84 L1235.49 175.70 L1238.97 173.51 L1242.33 171.33 L1245.54 169.22 L1248.55 167.22 L1251.40 165.30 L1254.17 163.36 L1256.96 161.28 L1260.06 158.80 L1263.33 156.05 L1266.24 153.54 L1268.27 151.81 L1268.27 151.81 L1282.42 159.28 L1282.42 159.28 L1282.13 161.94 L1281.70 165.75 L1281.27 170.00 L1280.97 173.96 L1280.83 177.44 L1280.78 180.83 L1280.80 184.26 L1280.85 187.87 L1280.91 191.72 L1281.01 195.72 L1281.16 199.83 L1281.39 203.97 L1281.78 208.59 L1282.28 213.54 L1282.76 218.00 L1283.10 221.10 L1296.06 226.41 L1298.47 224.44 L1301.94 221.60 L1305.78 218.42 L1309.29 215.40 L1312.37 212.61 L1315.36 209.80 L1318.23 207.01 L1320.98 204.31 L1323.55 201.77 L1325.97 199.34 L1328.31 196.90 L1330.65 194.32 L1333.21 191.28 L1335.89 187.95 L1338.26 184.94 L1339.92 182.84 L1339.92 182.84 L1355.24 187.44 L1355.24 187.44 L1355.47 190.10 L1355.79 193.93 L1356.19 198.18 L1356.65 202.12 L1357.19 205.57 L1357.80 208.90 L1358.48 212.26 L1359.22 215.80 L1360.03 219.56 L1360.89 223.47 L1361.84 227.46 L1362.87 231.49 L1364.14 235.94 L1365.59 240.71 L1366.92 244.99 L1367.85 247.96 L1381.59 250.67 L1383.58 248.27 L1386.44 244.81 L1389.59 240.95 L1392.45 237.31 L1394.93 233.98 L1397.32 230.64 L1399.60 227.35 L1401.77 224.18 L1403.80 221.19 L1405.71 218.33 L1407.53 215.48 L1409.33 212.50 L1411.26 209.03 L1413.24 205.24 L1414.99 201.82 L1416.21 199.45 L1416.21 199.45 L1432.13 201.00 L1432.13 201.00 L1432.87 203.57 L1433.92 207.26 L1435.13 211.35 L1436.35 215.13 L1437.54 218.41 L1438.79 221.56 L1440.10 224.73 L1441.52 228.05 L1443.03 231.59 L1444.64 235.25 L1446.34 238.99 L1448.13 242.74 L1450.23 246.86 L1452.58 251.26 L1454.71 255.20 L1456.20 257.95 L1470.20 257.95 L1471.69 255.20 L1473.82 251.26 L1476.17 246.86 L1478.27 242.74 L1480.06 238.99 L1481.76 235.25 L1483.37 231.59 L1484.88 228.05 L1486.30 224.73 L1487.61 221.56 L1488.86 218.41 L1490.05 215.13 L1491.27 211.35 L1492.48 207.26 L1493.53 203.57 L1494.27 201.00 L1494.27 201.00 L1510.19 199.45 L1510.19 199.45 L1511.41 201.82 L1513.16 205.24 L1515.14 209.03 L1517.07 212.50 L1518.87 215.48 L1520.69 218.33 L1522.60 221.19 L1524.63 224.18 L1526.80 227.35 L1529.08 230.64 L1531.47 233.98 L1533.95 237.31 L1536.81 240.95 L1539.96 244.81 L1542.82 248.27 L1544.81 250.67 L1558.55 247.96 L1559.48 244.99 L1560.81 240.71 L1562.26 235.94 L1563.53 231.49 L1564.56 227.46 L1565.51 223.47 L1566.37 219.56 L1567.18 215.80 L1567.92 212.26 L1568.60 208.90 L1569.21 205.57 L1569.75 202.12 L1570.21 198.18 L1570.61 193.93 L1570.93 190.10 L1571.16 187.44 L1571.16 187.44 L1586.48 182.84 L1586.48 182.84 L1588.14 184.94 L1590.51 187.95 L1593.19 191.28 L1595.75 194.32 L1598.09 196.90 L1600.43 199.34 L1602.85 201.77 L1605.42 204.31 L1608.17 207.01 L1611.04 209.80 L1614.03 212.61 L1617.11 215.40 L1620.62 218.42 L1624.46 221.60 L1627.93 224.44 L1630.34 226.41 L1643.30 221.10 L1643.64 218.00 L1644.12 213.54 L1644.62 208.59 L1645.01 203.97 L1645.24 199.83 L1645.39 195.72 L1645.49 191.72 L1645.55 187.87 L1645.60 184.26 L1645.62 180.83 L1645.57 177.44 L1645.43 173.96 L1645.13 170.00 L1644.70 165.75 L1644.27 161.94 L1643.98 159.28 L1643.98 159.28 L1658.13 151.81 L1658.13 151.81 L1660.16 153.54 L1663.07 156.05 L1666.34 158.80 L1669.44 161.28 L1672.23 163.36 L1675.00 165.30 L1677.85 167.22 L1680.86 169.22 L1684.07 171.33 L1687.43 173.51 L1690.91 175.70 L1694.47 177.84 L1698.50 180.12 L1702.87 182.50 L1706.83 184.61 L1709.58 186.08 L1721.27 178.37 L1721.00 175.26 L1720.61 170.80 L1720.15 165.83 L1719.63 161.24 L1719.06 157.12 L1718.42 153.06 L1717.74 149.12 L1717.06 145.33 L1716.41 141.78 L1715.76 138.41 L1715.06 135.10 L1714.25 131.71 L1713.19 127.88 L1711.94 123.79 L1710.79 120.13 L1709.99 117.59 L1709.99 117.59 L1722.43 107.52 L1722.43 107.52 L1724.75 108.83 L1728.09 110.72 L1731.83 112.79 L1735.35 114.63 L1738.50 116.12 L1741.59 117.50 L1744.75 118.83 L1748.09 120.21 L1751.66 121.66 L1755.37 123.15 L1759.21 124.62 L1763.11 126.04 L1767.50 127.50 L1772.26 128.99 L1776.55 130.29 L1779.53 131.21 L1789.51 121.38 L1788.64 118.38 L1787.40 114.08 L1785.99 109.30 L1784.59 104.88 L1783.24 100.96 L1781.82 97.10 L1780.40 93.36 L1778.99 89.78 L1777.67 86.42 L1776.38 83.24 L1775.06 80.12 L1773.61 76.95 L1771.83 73.40 L1769.82 69.63 L1767.98 66.27 L1766.70 63.92 L1766.70 63.92Z" fill="none" stroke="#1c1c8c" stroke-width="1.6" stroke-linejoin="round"/>
<path d="M1433.17 516.75 L1433.00 526.58 L1433.22 528.39 L1433.55 530.97 L1434.00 533.55 L1434.59 535.89 L1435.31 538.23 L1436.10 540.49 L1436.96 542.63 L1437.91 544.70 L1438.91 546.76 L1439.97 548.82 L1441.09 550.88 L1442.30 553.01 L1443.61 555.30 L1445.01 557.66 L1446.49 559.94 L1448.10 562.13 L1449.79 564.23 L1451.39 566.18 L1452.84 567.86 L1454.19 569.39 L1455.51 571.03 L1456.94 573.13 L1458.33 575.34 L1459.30 576.90 L1467.50 576.90 L1468.47 575.34 L1469.86 573.13 L1471.29 571.03 L1472.61 569.39 L1473.96 567.86 L1475.41 566.18 L1477.01 564.23 L1478.70 562.13 L1480.31 559.94 L1481.79 557.66 L1483.19 555.30 L1484.50 553.01 L1485.71 550.88 L1486.83 548.82 L1487.89 546.76 L1488.89 544.70 L1489.84 542.63 L1490.70 540.49 L1491.49 538.23 L1492.21 535.89 L1492.80 533.55 L1493.25 530.97 L1493.58 528.39 L1493.80 526.58 L1493.63 516.75 L1504.76 513.49 L1509.94 521.84 L1511.10 523.25 L1512.77 525.24 L1514.55 527.17 L1516.31 528.82 L1518.18 530.39 L1520.07 531.87 L1521.95 533.20 L1523.86 534.43 L1525.82 535.62 L1527.83 536.78 L1529.88 537.91 L1532.05 539.05 L1534.39 540.26 L1536.85 541.49 L1539.33 542.62 L1541.86 543.58 L1544.42 544.44 L1546.82 545.21 L1548.94 545.85 L1550.91 546.39 L1552.90 547.06 L1555.24 548.06 L1557.61 549.17 L1559.26 549.96 L1566.17 545.52 L1566.14 543.68 L1566.11 541.07 L1566.18 538.53 L1566.40 536.44 L1566.72 534.43 L1567.02 532.23 L1567.32 529.73 L1567.60 527.04 L1567.77 524.33 L1567.78 521.61 L1567.68 518.87 L1567.55 516.24 L1567.41 513.79 L1567.24 511.45 L1567.02 509.14 L1566.75 506.86 L1566.43 504.62 L1566.00 502.35 L1565.44 500.02 L1564.78 497.67 L1564.01 495.38 L1563.00 492.96 L1561.88 490.61 L1561.09 488.97 L1555.63 480.80 L1563.23 472.03 L1572.10 476.26 L1573.83 476.81 L1576.32 477.59 L1578.86 478.25 L1581.23 478.68 L1583.65 479.00 L1586.04 479.22 L1588.35 479.32 L1590.62 479.32 L1592.91 479.26 L1595.22 479.16 L1597.56 478.99 L1600.01 478.78 L1602.63 478.54 L1605.36 478.24 L1608.05 477.85 L1610.71 477.29 L1613.32 476.63 L1615.76 475.98 L1617.89 475.37 L1619.84 474.77 L1621.88 474.25 L1624.38 473.82 L1626.97 473.48 L1628.80 473.25 L1632.21 465.78 L1631.19 464.25 L1629.75 462.07 L1628.43 459.90 L1627.49 458.02 L1626.67 456.15 L1625.74 454.14 L1624.63 451.87 L1623.42 449.46 L1622.10 447.09 L1620.64 444.79 L1619.07 442.54 L1617.54 440.40 L1616.10 438.41 L1614.69 436.54 L1613.26 434.72 L1611.80 432.94 L1610.31 431.23 L1608.72 429.56 L1606.99 427.89 L1605.17 426.27 L1603.28 424.76 L1601.12 423.28 L1598.91 421.91 L1597.36 420.95 L1588.35 417.02 L1590.00 405.54 L1599.75 404.31 L1601.51 403.84 L1604.02 403.14 L1606.51 402.32 L1608.74 401.41 L1610.95 400.37 L1613.08 399.26 L1615.07 398.10 L1616.98 396.87 L1618.88 395.58 L1620.77 394.24 L1622.65 392.84 L1624.59 391.34 L1626.67 389.72 L1628.80 387.99 L1630.85 386.21 L1632.79 384.30 L1634.63 382.33 L1636.33 380.46 L1637.79 378.80 L1639.10 377.24 L1640.54 375.70 L1642.41 373.99 L1644.41 372.30 L1645.82 371.12 L1644.65 362.99 L1642.97 362.26 L1640.57 361.20 L1638.29 360.08 L1636.48 359.01 L1634.78 357.89 L1632.91 356.70 L1630.76 355.39 L1628.43 354.02 L1626.04 352.73 L1623.57 351.60 L1621.03 350.55 L1618.58 349.57 L1616.30 348.68 L1614.10 347.86 L1611.91 347.11 L1609.73 346.41 L1607.55 345.77 L1605.31 345.22 L1602.96 344.75 L1600.54 344.38 L1598.14 344.13 L1595.52 344.05 L1592.92 344.09 L1591.10 344.13 L1581.39 345.69 L1576.58 335.14 L1584.11 328.83 L1585.33 327.48 L1587.07 325.54 L1588.72 323.51 L1590.11 321.53 L1591.40 319.46 L1592.59 317.38 L1593.64 315.32 L1594.59 313.26 L1595.49 311.15 L1596.35 309.00 L1597.17 306.80 L1597.99 304.49 L1598.86 302.00 L1599.73 299.40 L1600.49 296.78 L1601.08 294.14 L1601.57 291.48 L1601.99 288.99 L1602.32 286.80 L1602.58 284.78 L1602.96 282.71 L1603.61 280.26 L1604.38 277.76 L1604.92 276.00 L1599.55 269.80 L1597.73 270.09 L1595.15 270.49 L1592.63 270.79 L1590.52 270.86 L1588.48 270.84 L1586.27 270.85 L1583.75 270.91 L1581.05 271.01 L1578.35 271.23 L1575.65 271.61 L1572.95 272.09 L1570.36 272.60 L1567.96 273.08 L1565.67 273.58 L1563.42 274.13 L1561.20 274.72 L1559.02 275.36 L1556.84 276.11 L1554.61 276.99 L1552.38 277.98 L1550.22 279.07 L1547.97 280.42 L1545.80 281.86 L1544.29 282.88 L1536.98 289.44 L1527.22 283.17 L1530.15 273.79 L1530.45 271.99 L1530.86 269.42 L1531.15 266.81 L1531.24 264.40 L1531.21 261.96 L1531.09 259.57 L1530.86 257.27 L1530.54 255.02 L1530.16 252.76 L1529.72 250.48 L1529.23 248.19 L1528.67 245.80 L1528.05 243.24 L1527.38 240.58 L1526.60 237.97 L1525.67 235.42 L1524.64 232.93 L1523.65 230.61 L1522.74 228.59 L1521.87 226.74 L1521.07 224.80 L1520.29 222.38 L1519.58 219.87 L1519.09 218.09 L1511.22 215.78 L1509.85 217.01 L1507.89 218.74 L1505.93 220.36 L1504.20 221.56 L1502.47 222.64 L1500.62 223.84 L1498.53 225.26 L1496.31 226.81 L1494.15 228.45 L1492.09 230.22 L1490.08 232.09 L1488.18 233.92 L1486.42 235.62 L1484.76 237.28 L1483.17 238.96 L1481.62 240.66 L1480.13 242.37 L1478.70 244.18 L1477.31 246.13 L1475.96 248.17 L1474.73 250.25 L1473.57 252.60 L1472.53 254.98 L1471.81 256.66 L1469.20 266.13 L1457.60 266.13 L1454.99 256.66 L1454.27 254.98 L1453.23 252.60 L1452.07 250.25 L1450.84 248.17 L1449.49 246.13 L1448.10 244.18 L1446.67 242.37 L1445.18 240.66 L1443.63 238.96 L1442.04 237.28 L1440.38 235.62 L1438.62 233.92 L1436.72 232.09 L1434.71 230.22 L1432.65 228.45 L1430.49 226.81 L1428.27 225.26 L1426.18 223.84 L1424.33 222.64 L1422.60 221.56 L1420.87 220.36 L1418.91 218.74 L1416.95 217.01 L1415.58 215.78 L1407.71 218.09 L1407.22 219.87 L1406.51 222.38 L1405.73 224.80 L1404.93 226.74 L1404.06 228.59 L1403.15 230.61 L1402.16 232.93 L1401.13 235.42 L1400.20 237.97 L1399.42 240.58 L1398.75 243.24 L1398.13 245.80 L1397.57 248.19 L1397.08 250.48 L1396.64 252.76 L1396.26 255.02 L1395.94 257.27 L1395.71 259.57 L1395.59 261.96 L1395.56 264.40 L1395.65 266.81 L1395.94 269.42 L1396.35 271.99 L1396.65 273.79 L1399.58 283.17 L1389.82 289.44 L1382.51 282.88 L1381.00 281.86 L1378.83 280.42 L1376.58 279.07 L1374.42 277.98 L1372.19 276.99 L1369.96 276.11 L1367.78 275.36 L1365.60 274.72 L1363.38 274.13 L1361.13 273.58 L1358.84 273.08 L1356.44 272.60 L1353.85 272.09 L1351.15 271.61 L1348.45 271.23 L1345.75 271.01 L1343.05 270.91 L1340.53 270.85 L1338.32 270.84 L1336.28 270.86 L1334.17 270.79 L1331.65 270.49 L1329.07 270.09 L1327.25 269.80 L1321.88 276.00 L1322.42 277.76 L1323.19 280.26 L1323.84 282.71 L1324.22 284.78 L1324.48 286.80 L1324.81 288.99 L1325.23 291.48 L1325.72 294.14 L1326.31 296.78 L1327.07 299.40 L1327.94 302.00 L1328.81 304.49 L1329.63 306.80 L1330.45 309.00 L1331.31 311.15 L1332.21 313.26 L1333.16 315.32 L1334.21 317.38 L1335.40 319.46 L1336.69 321.53 L1338.08 323.51 L1339.73 325.54 L1341.47 327.48 L1342.69 328.83 L1350.22 335.14 L1345.41 345.69 L1335.70 344.13 L1333.88 344.09 L1331.28 344.05 L1328.66 344.13 L1326.26 344.38 L1323.84 344.75 L1321.49 345.22 L1319.25 345.77 L1317.07 346.41 L1314.89 347.11 L1312.70 347.86 L1310.50 348.68 L1308.22 349.57 L1305.77 350.55 L1303.23 351.60 L1300.76 352.73 L1298.37 354.02 L1296.04 355.39 L1293.89 356.70 L1292.02 357.89 L1290.32 359.01 L1288.51 360.08 L1286.23 361.20 L1283.83 362.26 L1282.15 362.99 L1280.98 371.12 L1282.39 372.30 L1284.39 373.99 L1286.26 375.70 L1287.70 377.24 L1289.01 378.80 L1290.47 380.46 L1292.17 382.33 L1294.01 384.30 L1295.95 386.21 L1298.00 387.99 L1300.13 389.72 L1302.21 391.34 L1304.15 392.84 L1306.03 394.24 L1307.92 395.58 L1309.82 396.87 L1311.73 398.10 L1313.72 399.26 L1315.85 400.37 L1318.06 401.41 L1320.29 402.32 L1322.78 403.14 L1325.29 403.84 L1327.05 404.31 L1336.80 405.54 L1338.45 417.02 L1329.44 420.95 L1327.89 421.91 L1325.68 423.28 L1323.52 424.76 L1321.63 426.27 L1319.81 427.89 L1318.08 429.56 L1316.49 431.23 L1315.00 432.94 L1313.54 434.72 L1312.11 436.54 L1310.70 438.41 L1309.26 440.40 L1307.73 442.54 L1306.16 444.79 L1304.70 447.09 L1303.38 449.46 L1302.17 451.87 L1301.06 454.14 L1300.13 456.15 L1299.31 458.02 L1298.37 459.90 L1297.05 462.07 L1295.61 464.25 L1294.59 465.78 L1298.00 473.25 L1299.83 473.48 L1302.42 473.82 L1304.92 474.25 L1306.96 474.77 L1308.91 475.37 L1311.04 475.98 L1313.48 476.63 L1316.09 477.29 L1318.75 477.85 L1321.44 478.24 L1324.17 478.54 L1326.79 478.78 L1329.24 478.99 L1331.58 479.16 L1333.89 479.26 L1336.18 479.32 L1338.45 479.32 L1340.76 479.22 L1343.15 479.00 L1345.57 478.68 L1347.94 478.25 L1350.48 477.59 L1352.97 476.81 L1354.70 476.26 L1363.57 472.03 L1371.17 480.80 L1365.71 488.97 L1364.92 490.61 L1363.80 492.96 L1362.79 495.38 L1362.02 497.67 L1361.36 500.02 L1360.80 502.35 L1360.37 504.62 L1360.05 506.86 L1359.78 509.14 L1359.56 511.45 L1359.39 513.79 L1359.25 516.24 L1359.12 518.87 L1359.02 521.61 L1359.03 524.33 L1359.20 527.04 L1359.48 529.73 L1359.78 532.23 L1360.08 534.43 L1360.40 536.44 L1360.62 538.53 L1360.69 541.07 L1360.66 543.68 L1360.63 545.52 L1367.54 549.96 L1369.19 549.17 L1371.56 548.06 L1373.90 547.06 L1375.89 546.39 L1377.86 545.85 L1379.98 545.21 L1382.38 544.44 L1384.94 543.58 L1387.47 542.62 L1389.95 541.49 L1392.41 540.26 L1394.75 539.05 L1396.92 537.91 L1398.97 536.78 L1400.98 535.62 L1402.94 534.43 L1404.85 533.20 L1406.73 531.87 L1408.62 530.39 L1410.49 528.82 L1412.25 527.17 L1414.03 525.24 L1415.70 523.25 L1416.86 521.84 L1422.04 513.49Z" fill="none" stroke="#1e1e1e" stroke-width="1.3" stroke-linejoin="round"/>
</svg>
<svg class="ic" style="left:508px;top:149px;overflow:hidden" width="737" height="435" viewBox="508 149 737 435"><defs>
<linearGradient id="cyl" x1="0" y1="0" x2="0" y2="1"><stop offset="0" stop-color="#7c7c7c"/><stop offset="0.45" stop-color="#e2e2e2"/><stop offset="0.55" stop-color="#dcdcdc"/><stop offset="1" stop-color="#7a7a7a"/></linearGradient>
<linearGradient id="spl" x1="0" y1="0" x2="0" y2="1"><stop offset="0" stop-color="#2e2e2e"/><stop offset="0.5" stop-color="#555"/><stop offset="1" stop-color="#2e2e2e"/></linearGradient>
<pattern id="splp" width="4" height="4" patternUnits="userSpaceOnUse"><rect width="4" height="1" y="2" fill="#6a6a6a"/></pattern>
<linearGradient id="gearg" x1="0" y1="0" x2="0" y2="1"><stop offset="0" stop-color="#2e2e2e"/><stop offset="0.5" stop-color="#6e6e6e"/><stop offset="1" stop-color="#2e2e2e"/></linearGradient>
<pattern id="gearp" width="3.4" height="3.4" patternUnits="userSpaceOnUse" patternTransform="rotate(18)"><rect width="3.4" height="1.1" y="0" fill="#d0d0d0" opacity="0.6"/></pattern>
<linearGradient id="blueg" x1="0" y1="0" x2="0" y2="1"><stop offset="0" stop-color="#8a8ab8"/><stop offset="0.5" stop-color="#d4d4ea"/><stop offset="1" stop-color="#8a8ab8"/></linearGradient>
<pattern id="bluep" width="4.2" height="4.2" patternUnits="userSpaceOnUse" patternTransform="rotate(20)"><rect width="4.2" height="1.1" y="0" fill="#1414b4"/></pattern>
<filter id="shd" x="-10%" y="-10%" width="130%" height="140%"><feGaussianBlur in="SourceAlpha" stdDeviation="2"/><feOffset dx="2" dy="3"/><feComponentTransfer><feFuncA type="linear" slope="0.25"/></feComponentTransfer><feMerge><feMergeNode/><feMergeNode in="SourceGraphic"/></feMerge></filter>
</defs><g filter="url(#shd)"><rect x="542" y="373" width="4" height="41" fill="url(#cyl)" stroke="#2c2c2c" stroke-width="1.3"/><rect x="546" y="373.5" width="23" height="40.0" fill="url(#cyl)" stroke="#2c2c2c" stroke-width="1.3"/><rect x="569" y="377" width="4" height="33" fill="url(#cyl)" stroke="#2c2c2c" stroke-width="1.3"/><rect x="573" y="372" width="26" height="41.5" fill="url(#cyl)" stroke="#2c2c2c" stroke-width="1.3"/><rect x="599" y="377" width="3" height="33" fill="url(#cyl)" stroke="#2c2c2c" stroke-width="1.3"/><rect x="602" y="370" width="18" height="46" fill="url(#spl)" stroke="#262626" stroke-width="1.3"/><rect x="603" y="371" width="16" height="44" fill="url(#splp)"/><rect x="620.5" y="369" width="31.5" height="48" fill="url(#cyl)" stroke="#2c2c2c" stroke-width="1.3"/><rect x="679" y="372" width="39" height="42.5" fill="url(#cyl)" stroke="#2c2c2c" stroke-width="1.3"/><rect x="769" y="372" width="42" height="42.5" fill="url(#cyl)" stroke="#2c2c2c" stroke-width="1.3"/><rect x="840" y="370" width="89" height="46" fill="url(#cyl)" stroke="#2c2c2c" stroke-width="1.3"/><rect x="929" y="370" width="19" height="46" fill="url(#spl)" stroke="#262626" stroke-width="1.3"/><rect x="930" y="371" width="17" height="44" fill="url(#splp)"/><rect x="948" y="372" width="49.5" height="42.5" fill="url(#cyl)" stroke="#2c2c2c" stroke-width="1.3"/><rect x="997.5" y="375.5" width="25.5" height="35.0" fill="url(#cyl)" stroke="#2c2c2c" stroke-width="1.3"/><rect x="1023" y="377.3" width="44" height="31.19999999999999" fill="url(#cyl)" stroke="#2c2c2c" stroke-width="1.3"/><rect x="1067" y="379.3" width="31" height="28.19999999999999" fill="url(#cyl)" stroke="#2c2c2c" stroke-width="1.3"/><rect x="1098" y="381" width="38" height="23.5" fill="url(#cyl)" stroke="#2c2c2c" stroke-width="1.3"/><rect x="1136" y="382.7" width="8" height="20.5" fill="url(#cyl)" stroke="#2c2c2c" stroke-width="1.3"/><rect x="1144" y="380" width="46" height="25.600000000000023" fill="url(#spl)" stroke="#262626" stroke-width="1.3"/><rect x="1145" y="381" width="44" height="23.600000000000023" fill="url(#splp)"/><rect x="1190" y="386" width="26" height="14.600000000000023" fill="url(#cyl)" stroke="#2c2c2c" stroke-width="1.3"/></g><path d="M515 393.5H1240" stroke="#999" stroke-width="1" stroke-dasharray="14 4 3 4"/><g filter="url(#shd)"><rect x="652" y="355" width="27" height="76" fill="url(#gearg)" stroke="#2a2a2a" stroke-width="1.3"/><rect x="652" y="355" width="27" height="76" fill="url(#gearp)"/><rect x="811" y="364" width="29" height="59" fill="url(#gearg)" stroke="#2a2a2a" stroke-width="1.3"/><rect x="811" y="364" width="29" height="59" fill="url(#gearp)"/><rect x="650" y="265" width="30" height="90" fill="url(#gearg)" stroke="#2a2a2a" stroke-width="1.3"/><rect x="650" y="265" width="30" height="90" fill="url(#gearp)"/><rect x="807" y="275" width="37" height="89" fill="url(#gearg)" stroke="#2a2a2a" stroke-width="1.3"/><rect x="807" y="275" width="37" height="89" fill="url(#gearp)"/></g><rect x="718.5" y="265.5" width="50.0" height="106.5" fill="url(#blueg)"/><rect x="718.5" y="265.5" width="50.0" height="106.5" fill="url(#bluep)" opacity="0.85"/><rect x="718.5" y="265.5" width="50.0" height="106.5" fill="none" stroke="#0000a8" stroke-width="2"/><rect x="718.5" y="372" width="50.0" height="42.5" fill="url(#blueg)"/><rect x="718.5" y="372" width="50.0" height="42.5" fill="url(#bluep)" opacity="0.85"/><rect x="718.5" y="372" width="50.0" height="42.5" fill="none" stroke="#0000a8" stroke-width="2"/><rect x="718.5" y="370" width="50" height="4" fill="#0000a8"/><path d="M556.5 347H559.5V363H565L558 372L551 363H556.5Z" fill="#8c8c8c" stroke="#555" stroke-width="0.8" filter="url(#shd)"/><path d="M1008.5 349H1011.5V365H1017L1010 374L1003 365H1008.5Z" fill="#8c8c8c" stroke="#555" stroke-width="0.8" filter="url(#shd)"/></svg>
<svg class="ic" style="left:548px;top:301px" width="20" height="20"><use href="#iDia"/></svg>
<div class="a" style="left:547px;top:324px;width:23px;height:22px;border:1.5px solid #2a2a2a;border-radius:8px;background:#f5f5f5;box-shadow:1px 2px 2px rgba(0,0,0,.25);font-weight:bold;font-size:12.5px;color:#222;text-align:center;line-height:21px">P1</div>
<svg class="ic" style="left:1000px;top:303px" width="20" height="20"><use href="#iDia"/></svg>
<div class="a" style="left:999px;top:326px;width:23px;height:22px;border:1.5px solid #2a2a2a;border-radius:8px;background:#f5f5f5;box-shadow:1px 2px 2px rgba(0,0,0,.25);font-weight:bold;font-size:12.5px;color:#222;text-align:center;line-height:21px">P2</div>
<svg class="ic" style="left:656px;top:278px" width="18" height="18"><use href="#iVprof"/></svg>
<div class="a" style="left:654px;top:302px;width:21px;height:19px;border:1.5px solid #2a2a2a;border-radius:7px;background:#f5f5f5;box-shadow:1px 2px 2px rgba(0,0,0,.25);font-weight:bold;font-size:12.5px;color:#222;text-align:center;line-height:18px">S1</div>
<svg class="ic" style="left:735px;top:285px" width="18" height="19"><use href="#iVprof"/></svg>
<div class="a" style="left:733px;top:307px;width:22px;height:22px;border:1.5px solid #1010a0;border-radius:8px;background:#f5f5f5;box-shadow:1px 2px 2px rgba(0,0,0,.25);font-weight:bold;font-size:12.5px;color:#1010a0;text-align:center;line-height:21px">S2</div>
<svg class="ic" style="left:816px;top:287px" width="19" height="18"><use href="#iVprof"/></svg>
<div class="a" style="left:815px;top:310px;width:21px;height:20px;border:1.5px solid #2a2a2a;border-radius:7px;background:#f5f5f5;box-shadow:1px 2px 2px rgba(0,0,0,.25);font-weight:bold;font-size:12.5px;color:#222;text-align:center;line-height:19px">S3</div>
<div class="a" style="left:508px;top:584px;width:1164px;height:1px;background:#c9c9da"></div>
<div class="a" style="left:508px;top:585px;width:1164px;height:3px;background:#ececf2"></div>
<div class="a" style="left:508px;top:588px;width:1164px;height:1px;background:#c9c9da"></div>
<div class="a" style="left:893px;top:589px;width:1px;height:395px;background:#c9c9da"></div>
<div class="a" style="left:897px;top:589px;width:1px;height:395px;background:#c9c9da"></div>
<div class="a" style="left:1286px;top:589px;width:1px;height:395px;background:#c9c9da"></div>
<div class="a" style="left:1290px;top:589px;width:1px;height:395px;background:#c9c9da"></div>
<div class="a" style="left:894px;top:589px;width:3px;height:395px;background:#ececf2"></div>
<div class="a" style="left:1287px;top:589px;width:3px;height:395px;background:#ececf2"></div>
<div class="a" style="left:508px;top:589px;width:385px;height:25px;background:#f3f3f6"></div>
<div class="a" style="left:508px;top:614px;width:385px;height:1px;background:#c9c9da"></div>
<div class="a" style="left:508px;top:615px;width:385px;height:337px;background:#fff"></div>
<div class="a" style="left:508px;top:952px;width:385px;height:1px;background:#c9c9da"></div>
<div class="a" style="left:508px;top:953px;width:385px;height:30px;background:#f3f3f6"></div>
<div class="a" style="left:508px;top:983px;width:385px;height:1px;background:#c9c9da"></div>
<div class="a" style="left:898px;top:589px;width:388px;height:25px;background:#f3f3f6"></div>
<div class="a" style="left:898px;top:614px;width:388px;height:1px;background:#c9c9da"></div>
<div class="a" style="left:898px;top:615px;width:388px;height:337px;background:#fff"></div>
<div class="a" style="left:898px;top:952px;width:388px;height:1px;background:#c9c9da"></div>
<div class="a" style="left:898px;top:953px;width:388px;height:30px;background:#f3f3f6"></div>
<div class="a" style="left:898px;top:983px;width:388px;height:1px;background:#c9c9da"></div>
<div class="a" style="left:1291px;top:589px;width:381px;height:25px;background:#f3f3f6"></div>
<div class="a" style="left:1291px;top:614px;width:381px;height:1px;background:#c9c9da"></div>
<div class="a" style="left:1291px;top:615px;width:381px;height:337px;background:#fff"></div>
<div class="a" style="left:1291px;top:952px;width:381px;height:1px;background:#c9c9da"></div>
<div class="a" style="left:1291px;top:953px;width:381px;height:30px;background:#f3f3f6"></div>
<div class="a" style="left:1291px;top:983px;width:381px;height:1px;background:#c9c9da"></div>
<svg class="ic" style="left:514px;top:592px" width="20" height="20"><use href="#iGear"/></svg>
<div class="t" style="left:539.5px;top:596.8px;font-size:12px;font-weight:bold;font-style:normal;color:#000;">Laufverzahnung</div>
<svg class="ic" style="left:904px;top:592px" width="20" height="20"><use href="#iV"/></svg>
<div class="t" style="left:929px;top:596.8px;font-size:12px;font-weight:bold;font-style:normal;color:#000;">Zweiflankenwälz-Lehrzahnrad</div>
<svg class="ic" style="left:1297px;top:592px" width="20" height="20"><use href="#iSine"/></svg>
<div class="t" style="left:517px;top:627.8px;font-size:12px;font-weight:normal;font-style:normal;color:#000;">Name</div>
<div class="inp" style="left:618px;top:620px;width:224px;height:25px"></div>
<div class="t" style="left:625px;top:627.8px;font-size:12px;font-weight:normal;font-style:normal;color:#000;;letter-spacing:-0.310px">V2</div>
<div class="t" style="left:517px;top:657.8px;font-size:12px;font-weight:normal;font-style:normal;color:#000;">Verzahnungsart</div>
<div class="inp" style="left:618px;top:650px;width:224px;height:25px"></div>
<div class="a" style="left:829px;top:651px;width:1px;height:23px;background:#dcdce4"></div>
<svg class="ic" style="left:832px;top:661px" width="8" height="5"><path d="M0 0.5H8L4 4.5Z" fill="#777"/></svg>
<div class="t" style="left:517px;top:687.8px;font-size:12px;font-weight:normal;font-style:normal;color:#000;">Position</div>
<div class="inp" style="left:618px;top:680px;width:224px;height:25px"></div>
<div class="t" style="left:625px;top:687.8px;font-size:12px;font-weight:normal;font-style:normal;color:#000;;letter-spacing:-0.413px">168,05 - 217,55</div>
<div class="t" style="left:847.5px;top:687.8px;font-size:12px;font-weight:normal;font-style:normal;color:#000;">mm</div>
<div class="t" style="left:517px;top:717.8px;font-size:12px;font-weight:normal;font-style:normal;color:#000;">Länge, Zahnbreite</div>
<div class="inp" style="left:618px;top:710px;width:224px;height:25px"></div>
<div class="t" style="left:625px;top:717.8px;font-size:12px;font-weight:normal;font-style:normal;color:#000;;letter-spacing:-0.465px">49,5</div>
<div class="t" style="left:847.5px;top:717.8px;font-size:12px;font-weight:normal;font-style:normal;color:#000;">mm</div>
<div class="inp" style="left:618px;top:740px;width:224px;height:25px"></div>
<div class="t" style="left:625px;top:747.8px;font-size:12px;font-weight:normal;font-style:normal;color:#000;;letter-spacing:-0.465px">42,1</div>
<div class="t" style="left:847.5px;top:747.8px;font-size:12px;font-weight:normal;font-style:normal;color:#000;">mm</div>
<div class="inp" style="left:618px;top:770px;width:224px;height:25px"></div>
<div class="t" style="left:625px;top:777.8px;font-size:12px;font-weight:normal;font-style:normal;color:#000;;letter-spacing:-0.465px">29,1</div>
<div class="t" style="left:847.5px;top:777.8px;font-size:12px;font-weight:normal;font-style:normal;color:#000;">mm</div>
<div class="a" style="left:517px;top:801px;width:349px;height:1px;background:#c9c9da"></div>
<div class="t" style="left:517px;top:814.8px;font-size:12px;font-weight:normal;font-style:normal;color:#000;">Zähnezahl</div>
<div class="inp" style="left:618px;top:807px;width:224px;height:25px"></div>
<div class="t" style="left:625px;top:814.8px;font-size:12px;font-weight:normal;font-style:normal;color:#000;;letter-spacing:-0.620px">11</div>
<div class="t" style="left:517px;top:844.8px;font-size:12px;font-weight:normal;font-style:normal;color:#000;">Modul</div>
<div class="inp" style="left:618px;top:837px;width:224px;height:25px"></div>
<div class="t" style="left:625px;top:844.8px;font-size:12px;font-weight:normal;font-style:normal;color:#000;;letter-spacing:-0.465px">2,75</div>
<div class="t" style="left:847.5px;top:844.8px;font-size:12px;font-weight:normal;font-style:normal;color:#000;">mm</div>
<div class="t" style="left:517px;top:904.8px;font-size:12px;font-weight:normal;font-style:normal;color:#000;">Teilkreis-Ø</div>
<div class="inp" style="left:618px;top:897px;width:224px;height:25px"></div>
<div class="t" style="left:625px;top:904.8px;font-size:12px;font-weight:normal;font-style:normal;color:#000;;letter-spacing:-0.531px">33,6562</div>
<div class="t" style="left:847.5px;top:904.8px;font-size:12px;font-weight:normal;font-style:normal;color:#000;">mm</div>
<div class="t" style="left:517px;top:934.8px;font-size:12px;font-weight:normal;font-style:normal;color:#000;">Grundkreis-Ø</div>
<div class="inp" style="left:618px;top:927px;width:224px;height:25px"></div>
<div class="t" style="left:625px;top:934.8px;font-size:12px;font-weight:normal;font-style:normal;color:#000;;letter-spacing:-0.531px">29,8748</div>
<div class="t" style="left:847.5px;top:934.8px;font-size:12px;font-weight:normal;font-style:normal;color:#000;">mm</div>
<div class="t" style="left:517px;top:874.8px;font-size:12px;font-weight:normal;font-style:normal;color:#000;">Eingriffswinkel</div>
<div class="inp" style="left:618px;top:867px;width:69px;height:25px"></div>
<div class="t" style="left:625px;top:874.8px;font-size:12px;font-weight:normal;font-style:normal;color:#000;;letter-spacing:-0.620px">25</div>
<div class="t" style="left:691px;top:873.8px;font-size:11px;font-weight:normal;font-style:normal;color:#000;">°</div>
<div class="inp" style="left:701px;top:867px;width:68px;height:25px"></div>
<div class="t" style="left:708px;top:874.8px;font-size:12px;font-weight:normal;font-style:normal;color:#000;">0</div>
<div class="t" style="left:773px;top:872.8px;font-size:11px;font-weight:normal;font-style:normal;color:#000;">'</div>
<div class="inp" style="left:783px;top:867px;width:69px;height:25px"></div>
<div class="t" style="left:790px;top:874.8px;font-size:12px;font-weight:normal;font-style:normal;color:#000;">0</div>
<div class="t" style="left:856px;top:872.8px;font-size:11px;font-weight:normal;font-style:normal;color:#000;">"</div>
<div class="a" style="left:508px;top:952px;width:385px;height:1px;background:#c9c9da"></div>
<div class="a" style="left:876px;top:615px;width:17px;height:337px;background:#f0f0f0"></div>
<div class="a" style="left:876px;top:633px;width:17px;height:171px;background:#cdcdcd"></div>
<svg class="ic" style="left:880px;top:621px" width="10" height="6"><path d="M1 5L5 1L9 5" fill="none" stroke="#aaa" stroke-width="1"/></svg>
<svg class="ic" style="left:880px;top:940px" width="10" height="6"><path d="M1 1L5 5L9 1" fill="none" stroke="#aaa" stroke-width="1"/></svg>
<div class="t" style="left:907.5px;top:627.8px;font-size:12px;font-weight:normal;font-style:normal;color:#000;">Name</div>
<div class="inp" style="left:945px;top:620px;width:310px;height:25px"></div>
<div class="t" style="left:952px;top:627.8px;font-size:12px;font-weight:normal;font-style:normal;color:#000;;letter-spacing:-0.465px">6P05 012 966</div>
<div class="t" style="left:907.5px;top:657.8px;font-size:12px;font-weight:normal;font-style:normal;color:#000;">M-ID</div>
<div class="inp" style="left:945px;top:650px;width:247px;height:25px"></div>
<div class="t" style="left:952px;top:657.8px;font-size:12px;font-weight:normal;font-style:normal;color:#000;;letter-spacing:-0.310px">S2</div>
<div class="a" style="left:1179px;top:651px;width:1px;height:23px;background:#dcdce4"></div>
<svg class="ic" style="left:1182px;top:661px" width="8" height="5"><path d="M0 0.5H8L4 4.5Z" fill="#777"/></svg>
<div class="t" style="left:1204px;top:657.8px;font-size:12px;font-weight:normal;font-style:normal;color:#000;">Aktiv</div>
<div class="a" style="left:1237px;top:651px;width:18px;height:22px;border:1px solid #c8c8d0;border-radius:4px;background:#f4f4f6"></div>
<svg class="ic" style="left:1240px;top:656px" width="12" height="12"><path d="M2 6L5 10L10 1.5" fill="none" stroke="#405040" stroke-width="1.6"/></svg>
<div class="a" style="left:907px;top:681px;width:353px;height:1px;background:#c9c9da"></div>
<div class="t" style="left:907.5px;top:694.8px;font-size:12px;font-weight:normal;font-style:normal;color:#000;">Raster (Auflösung)</div>
<div class="inp" style="left:1011px;top:687px;width:244px;height:25px"></div>
<div class="t" style="left:1018px;top:694.8px;font-size:12px;font-weight:normal;font-style:normal;color:#000;;letter-spacing:-0.194px">0,5°&nbsp; (720)</div>
<div class="a" style="left:1242px;top:688px;width:1px;height:23px;background:#dcdce4"></div>
<svg class="ic" style="left:1245px;top:698px" width="8" height="5"><path d="M0 0.5H8L4 4.5Z" fill="#777"/></svg>
<div class="t" style="left:907.5px;top:724.8px;font-size:12px;font-weight:normal;font-style:normal;color:#000;">Rohdaten-Filter</div>
<div class="inp" style="left:1011px;top:717px;width:244px;height:25px"></div>
<div class="t" style="left:1018px;top:724.8px;font-size:12px;font-weight:normal;font-style:normal;color:#000;">---</div>
<div class="a" style="left:1242px;top:718px;width:1px;height:23px;background:#dcdce4"></div>
<svg class="ic" style="left:1245px;top:728px" width="8" height="5"><path d="M0 0.5H8L4 4.5Z" fill="#777"/></svg>
<div class="a" style="left:907px;top:748px;width:353px;height:1px;background:#c9c9da"></div>
<div class="t" style="left:907.5px;top:762.3px;font-size:12px;font-weight:normal;font-style:normal;color:#000;">Position</div>
<div class="inp" style="left:1008px;top:754.5px;width:227px;height:25px"></div>
<div class="t" style="left:1015px;top:762.3px;font-size:12px;font-weight:normal;font-style:normal;color:#000;;letter-spacing:-0.388px">168,05 - 217,55 (192,80)</div>
<div class="t" style="left:1240px;top:762.3px;font-size:12px;font-weight:normal;font-style:normal;color:#000;">mm</div>
<div class="t" style="left:907.5px;top:792.3px;font-size:12px;font-weight:normal;font-style:normal;color:#000;">Verschiebung</div>
<div class="inp" style="left:1008px;top:784.5px;width:227px;height:25px"></div>
<div class="t" style="left:1015px;top:792.3px;font-size:12px;font-weight:normal;font-style:normal;color:#000;">0</div>
<div class="t" style="left:1240px;top:792.3px;font-size:12px;font-weight:normal;font-style:normal;color:#000;">mm</div>
<div class="t" style="left:907.5px;top:822.3px;font-size:12px;font-weight:normal;font-style:normal;color:#000;">Länge, Zahnbreite</div>
<div class="inp" style="left:1008px;top:814.5px;width:227px;height:25px"></div>
<div class="t" style="left:1015px;top:822.3px;font-size:12px;font-weight:normal;font-style:normal;color:#000;;letter-spacing:-0.465px">49,5</div>
<div class="t" style="left:1240px;top:822.3px;font-size:12px;font-weight:normal;font-style:normal;color:#000;">mm</div>
<div class="t" style="left:907.5px;top:852.3px;font-size:12px;font-weight:normal;font-style:normal;color:#000;">Gem. Zahnbreite</div>
<div class="inp" style="left:1008px;top:844.5px;width:227px;height:25px"></div>
<div class="t" style="left:1015px;top:852.3px;font-size:12px;font-weight:normal;font-style:normal;color:#000;;letter-spacing:-0.496px">49,50</div>
<div class="t" style="left:1240px;top:852.3px;font-size:12px;font-weight:normal;font-style:normal;color:#000;">mm</div>
<div class="t" style="left:907.5px;top:882.3px;font-size:12px;font-weight:normal;font-style:normal;color:#000;">Kopfkreis-Ø</div>
<div class="inp" style="left:1008px;top:874.5px;width:227px;height:25px"></div>
<div class="t" style="left:1015px;top:882.3px;font-size:12px;font-weight:normal;font-style:normal;color:#000;;letter-spacing:-0.517px">103,21</div>
<div class="t" style="left:1240px;top:882.3px;font-size:12px;font-weight:normal;font-style:normal;color:#000;">mm</div>
<div class="t" style="left:907.5px;top:912.3px;font-size:12px;font-weight:normal;font-style:normal;color:#000;">Fußkreis-Ø</div>
<div class="inp" style="left:1008px;top:904.5px;width:227px;height:25px"></div>
<div class="t" style="left:1015px;top:912.3px;font-size:12px;font-weight:normal;font-style:normal;color:#000;;letter-spacing:-0.496px">90,53</div>
<div class="t" style="left:1240px;top:912.3px;font-size:12px;font-weight:normal;font-style:normal;color:#000;">mm</div>
<div class="a" style="left:907px;top:935px;width:353px;height:1px;background:#c9c9da"></div>
<div class="inp" style="left:1008px;top:941px;width:227px;height:11px"></div>
<div class="t" style="left:907.5px;top:951.8px;font-size:12px;font-weight:normal;font-style:normal;color:#000;">Zähnezahl</div>
<div class="t" style="left:1015px;top:951.8px;font-size:12px;font-weight:normal;font-style:normal;color:#000;;letter-spacing:-0.620px">35</div>
<div class="a" style="left:898px;top:952px;width:388px;height:31px;background:#f3f3f6"></div>
<div class="a" style="left:898px;top:952px;width:388px;height:1px;background:#c9c9da"></div>
<div class="a" style="left:1269px;top:615px;width:17px;height:337px;background:#f0f0f0"></div>
<div class="a" style="left:1269px;top:634px;width:17px;height:149px;background:#cdcdcd"></div>
<svg class="ic" style="left:1273px;top:621px" width="10" height="6"><path d="M1 5L5 1L9 5" fill="none" stroke="#aaa" stroke-width="1"/></svg>
<svg class="ic" style="left:1273px;top:939px" width="10" height="6"><path d="M1 1L5 5L9 1" fill="none" stroke="#aaa" stroke-width="1"/></svg>

<svg width="0" height="0" style="position:absolute"><defs>
<linearGradient id="gGreen" x1="0" y1="0" x2="1" y2="1"><stop offset="0" stop-color="#7af07a"/><stop offset="0.5" stop-color="#22c022"/><stop offset="1" stop-color="#0a9a0a"/></linearGradient>
<linearGradient id="gPurple" x1="0" y1="0" x2="1" y2="0"><stop offset="0" stop-color="#b88ad8"/><stop offset="1" stop-color="#8a58b8"/></linearGradient>
<linearGradient id="gGrayF" x1="0" y1="0" x2="1" y2="0"><stop offset="0" stop-color="#9a9a9a"/><stop offset="1" stop-color="#6a6a6a"/></linearGradient>
<linearGradient id="gMetal" x1="0" y1="0" x2="1" y2="0"><stop offset="0" stop-color="#fff"/><stop offset="0.5" stop-color="#b0b0b8"/><stop offset="1" stop-color="#888890"/></linearGradient>
<linearGradient id="gOrange" x1="0" y1="0" x2="1" y2="1"><stop offset="0" stop-color="#ffc080"/><stop offset="1" stop-color="#e86010"/></linearGradient>
<linearGradient id="gGrayArrow" x1="0" y1="0" x2="1" y2="1"><stop offset="0" stop-color="#c8c8c8"/><stop offset="1" stop-color="#808080"/></linearGradient>
<linearGradient id="gLightX" x1="0" y1="0" x2="1" y2="1"><stop offset="0" stop-color="#dcdcdc"/><stop offset="1" stop-color="#a4a4a4"/></linearGradient>
<radialGradient id="gGreenBall" cx="0.6" cy="0.3" r="0.8"><stop offset="0" stop-color="#8ae08a"/><stop offset="0.6" stop-color="#0a8a0a"/><stop offset="1" stop-color="#046004"/></radialGradient>
<linearGradient id="gBlueArr" x1="0" y1="0" x2="0" y2="1"><stop offset="0" stop-color="#8ad8ff"/><stop offset="1" stop-color="#1a8ae0"/></linearGradient>
<symbol id="tPlus" viewBox="0 0 32 32"><path d="M11 1H21V11H31V21H21V31H11V21H1V11H11Z" fill="url(#gGreen)" stroke="#1a9a1a" stroke-width="1.2" stroke-linejoin="round"/></symbol>
<symbol id="floppy" viewBox="0 0 32 32">
<rect x="0.5" y="0.5" width="29" height="29" rx="1.5" fill="inherit"/>
</symbol>
<symbol id="tPencil" viewBox="0 0 32 32"><path d="M2 31L4 24L25 3L29 7L8 28Z" fill="#f0d070" stroke="#8a7030" stroke-width="0.8"/><path d="M2 31L4 24L8 28Z" fill="#e8c8a0"/><path d="M2 31L3 28L5 30Z" fill="#333"/><path d="M25 3L27 1L31 5L29 7Z" fill="#d84040"/><path d="M24 4L28 8" stroke="#3a9a3a" stroke-width="1.5"/></symbol>
<symbol id="tGearBase" viewBox="0 0 32 32">
<rect x="0" y="9" width="32" height="14" fill="url(#gShaft)"/>
<rect x="4.5" y="0" width="18" height="32" fill="#4a4a4a"/>
<g fill="#b4b4b4"><rect x="7" y="1" width="13" height="2"/><rect x="7" y="4" width="13" height="2"/><rect x="7" y="7" width="13" height="2"/><rect x="7" y="10" width="13" height="2"/><rect x="7" y="13" width="13" height="2"/><rect x="7" y="16" width="13" height="2" fill="#f4f4f4"/><rect x="7" y="19" width="13" height="2" fill="#dcdcdc"/><rect x="7" y="22" width="13" height="2"/><rect x="7" y="25" width="13" height="2"/><rect x="7" y="28" width="13" height="2"/></g>
</symbol>
<symbol id="tVBase" viewBox="0 0 32 32">
<rect x="0" y="17.5" width="32" height="14.5" fill="url(#gShaft)"/>
<rect x="23" y="8" width="9" height="24" fill="url(#gShaftL)"/>
<g fill="#555"><rect x="23" y="9" width="9" height="1.5"/><rect x="23" y="12" width="9" height="1.5" fill="#888"/></g>
<path d="M0 0H21L12 18V32H9V18Z" fill="#666"/>
</symbol>
<symbol id="tGridBase" viewBox="0 0 32 32">
<path d="M0.5 0V32M4.5 0V32M8.5 0V32M12.5 0V32M16.5 0V32M20.5 0V32M24.5 0V32M28.5 0V32M31.5 0V32M0 0.5H32M0 4.5H32M0 8.5H32M0 12.5H32M0 16.5H32M0 20.5H32M0 24.5H32M0 28.5H32M0 31.5H32" stroke="#a8a8a8" stroke-width="1"/>
<path d="M0.5 13L7 4L14 13" fill="none" stroke="#555" stroke-width="1.4"/><path d="M23 22L32 14" fill="none" stroke="#555" stroke-width="1.4"/>
</symbol>
<symbol id="oPlus" viewBox="0 0 32 32"><path d="M17 8H24.5V16.5H32V23.5H24.5V31.5H17V23.5H9V16.5H17Z" fill="url(#gLightX)" stroke="#8a8a8a" stroke-width="1"/></symbol>
<symbol id="oUp" viewBox="0 0 32 32"><path d="M21 3L31 14H25V29H17V14H11Z" fill="url(#gLightX)" stroke="#8a8a8a" stroke-width="1"/></symbol>
<symbol id="oDown" viewBox="0 0 32 32"><path d="M21 31L31 20H25V5H17V20H11Z" fill="url(#gLightX)" stroke="#8a8a8a" stroke-width="1"/></symbol>
<symbol id="oX" viewBox="0 0 32 32"><path d="M7 12L12 7L19 14L26 7L31 12L24 19L31 26L26 31L19 24L12 31L7 26L14 19Z" fill="#6e6e6e" stroke="#555" stroke-width="0.8"/></symbol>
<symbol id="tInfo" viewBox="0 0 32 32">
<rect x="0" y="17" width="27" height="12" fill="url(#gShaft)"/><rect x="19" y="17" width="8" height="12" fill="url(#gShaftL)"/>
<path d="M0 0H17L9 10Z" fill="#1a64c8"/><rect x="7.5" y="8" width="2.5" height="21" fill="#2a74d0"/>
<ellipse cx="16.5" cy="9.5" rx="11" ry="7.5" fill="#dfeefa" stroke="#8ab0d0" stroke-width="0.8"/><path d="M9 14L8 22L14 16Z" fill="#dfeefa"/>
<text x="14" y="15" font-family="Liberation Serif" font-weight="bold" font-size="13" fill="#1a3a9a">i</text>
</symbol>
<symbol id="tDoc" viewBox="0 0 32 32">
<path d="M0.5 0.5H12L17.5 6V22.5H0.5Z" fill="#fcfcfc" stroke="#b8b8b8" stroke-width="0.8"/><path d="M12 0.5V6H17.5" fill="#e8e8e8" stroke="#b8b8b8" stroke-width="0.8"/>
<path d="M3 6.5H7M5 10.5H10M5 15.5H8" stroke="#4a4a7a" stroke-width="0.9"/><circle cx="3" cy="10.5" r="1" fill="#3a3a6a"/><circle cx="3" cy="15.5" r="1" fill="none" stroke="#3a3a6a" stroke-width="0.7"/>
<path d="M9 21L10 18L20 7.5L22 9.5L12 20Z" fill="#f0d070" stroke="#8a7030" stroke-width="0.6"/><path d="M20 7.5L21 6.5L23 8.5L22 9.5Z" fill="#d84040"/>
</symbol>
<symbol id="tFloppy" viewBox="0 0 32 32">
<rect x="0.5" y="0.5" width="29" height="29" rx="1.5" fill="currentColor"/>
<rect x="4.5" y="1" width="21" height="16" fill="#fafafa"/><g stroke="#dde" stroke-width="0.6"><path d="M5 4H25M5 7H25M5 10H25M5 13H25"/></g>
<rect x="7" y="20" width="16" height="9.5" fill="url(#gMetal)"/><rect x="9.5" y="21.5" width="3.5" height="7" fill="currentColor" opacity="0.85"/>
<circle cx="2.3" cy="3" r="0.8" fill="#fff"/><circle cx="27.7" cy="3" r="0.8" fill="#fff"/>
</symbol>
<symbol id="bArrL" viewBox="0 0 16 14"><path d="M1 7L7 1V4.5H14V9.5H7V13Z" fill="url(#gBlueArr)" stroke="#1878c8" stroke-width="1"/></symbol>
<symbol id="bArrR" viewBox="0 0 16 14"><path d="M15 7L9 1V4.5H2V9.5H9V13Z" fill="url(#gBlueArr)" stroke="#1878c8" stroke-width="1"/></symbol>
<symbol id="bPlus" viewBox="0 0 16 16"><path d="M6 1H10V6H15V10H10V15H6V10H1V6H6Z" fill="#d8d8d8" stroke="#8a8a8a" stroke-width="1"/></symbol>
<symbol id="bX" viewBox="0 0 16 16"><path d="M1 3.5L3.5 1L8 5.5L12.5 1L15 3.5L10.5 8L15 12.5L12.5 15L8 10.5L3.5 15L1 12.5L5.5 8Z" fill="#6a6a6a" stroke="#4a4a4a" stroke-width="0.6"/></symbol>
</defs></svg>

<svg class="ic" style="left:9px;top:83px;" width="32" height="32" viewBox="0 0 32 32"><use href="#tPlus"/></svg>
<svg class="ic" style="left:48px;top:83px;color:#a070c8" width="32" height="32" viewBox="0 0 32 32"><use href="#tFloppy"/></svg>
<svg class="ic" style="left:48px;top:83px" width="32" height="32" viewBox="0 0 32 32"><path d="M30 13L21 4.5V9H8V17H21V21.5Z" fill="url(#gGreen)" stroke="#2aa02a" stroke-width="0.9"/></svg>
<svg class="ic" style="left:86px;top:83px;" width="31" height="32" viewBox="0 0 32 32"><use href="#tPencil"/></svg>
<svg class="ic" style="left:124px;top:83px;color:#7a7a7a" width="32" height="32" viewBox="0 0 32 32"><use href="#tFloppy"/></svg>
<svg class="ic" style="left:124px;top:83px" width="32" height="32" viewBox="0 0 32 32"><path d="M9 13.5L19 4V9H31V18H19V23Z" fill="url(#gGrayArrow)" stroke="#777" stroke-width="0.9"/></svg>
<svg class="ic" style="left:162px;top:83px;color:#a070c8" width="32" height="32" viewBox="0 0 32 32"><use href="#tFloppy"/></svg>
<svg class="ic" style="left:162px;top:83px" width="32" height="32" viewBox="0 0 32 32"><path d="M9 13.5L19 4V9H31V18H19V23Z" fill="url(#gOrange)" stroke="#f06000" stroke-width="1"/></svg>
<svg class="ic" style="left:206px;top:86px;" width="30" height="30" viewBox="0 0 32 32"><use href="#tInfo"/></svg>
<div class="a" style="left:242px;top:85px;width:23px;height:23px;border-radius:12px;background:radial-gradient(circle at 60% 30%,#8ae08a,#0a8a0a 55%,#046004)"></div>
<svg class="ic" style="left:250px;top:91px;" width="32" height="32" viewBox="0 0 32 32"><use href="#tDoc"/></svg>
<svg class="ic" style="left:279px;top:83px;color:#a070c8" width="32" height="32" viewBox="0 0 32 32"><use href="#tFloppy"/></svg>
<svg class="ic" style="left:288px;top:91px;" width="32" height="32" viewBox="0 0 32 32"><use href="#tDoc"/></svg>
<svg class="ic" style="left:320px;top:83px;" width="32" height="32" viewBox="0 0 32 32"><use href="#tGearBase"/></svg>
<svg class="ic" style="left:320px;top:83px;" width="32" height="32" viewBox="0 0 32 32"><use href="#oPlus"/></svg>
<svg class="ic" style="left:359px;top:83px;" width="32" height="32" viewBox="0 0 32 32"><use href="#tGearBase"/></svg>
<svg class="ic" style="left:359px;top:83px;" width="32" height="32" viewBox="0 0 32 32"><use href="#oUp"/></svg>
<svg class="ic" style="left:397px;top:83px;" width="32" height="32" viewBox="0 0 32 32"><use href="#tGearBase"/></svg>
<svg class="ic" style="left:397px;top:83px;" width="32" height="32" viewBox="0 0 32 32"><use href="#oDown"/></svg>
<svg class="ic" style="left:435px;top:83px;" width="32" height="32" viewBox="0 0 32 32"><use href="#tGearBase"/></svg>
<svg class="ic" style="left:435px;top:83px;" width="32" height="32" viewBox="0 0 32 32"><use href="#oX"/></svg>
<svg class="ic" style="left:478px;top:83px;" width="32" height="32" viewBox="0 0 32 32"><use href="#tVBase"/></svg>
<svg class="ic" style="left:478px;top:83px;" width="32" height="32" viewBox="0 0 32 32"><use href="#oPlus"/></svg>
<svg class="ic" style="left:516px;top:83px;" width="32" height="32" viewBox="0 0 32 32"><use href="#tVBase"/></svg>
<svg class="ic" style="left:516px;top:83px;" width="32" height="32" viewBox="0 0 32 32"><use href="#oUp"/></svg>
<svg class="ic" style="left:554px;top:83px;" width="32" height="32" viewBox="0 0 32 32"><use href="#tVBase"/></svg>
<svg class="ic" style="left:554px;top:83px;" width="32" height="32" viewBox="0 0 32 32"><use href="#oDown"/></svg>
<svg class="ic" style="left:592px;top:83px;" width="32" height="32" viewBox="0 0 32 32"><use href="#tVBase"/></svg>
<svg class="ic" style="left:592px;top:83px;" width="32" height="32" viewBox="0 0 32 32"><use href="#oX"/></svg>
<svg class="ic" style="left:635px;top:83px;" width="32" height="32" viewBox="0 0 32 32"><use href="#tGridBase"/></svg>
<svg class="ic" style="left:635px;top:83px;" width="32" height="32" viewBox="0 0 32 32"><use href="#oPlus"/></svg>
<svg class="ic" style="left:673px;top:83px;" width="32" height="32" viewBox="0 0 32 32"><use href="#tGridBase"/></svg>
<svg class="ic" style="left:673px;top:83px;" width="32" height="32" viewBox="0 0 32 32"><use href="#oUp"/></svg>
<svg class="ic" style="left:711px;top:83px;" width="32" height="32" viewBox="0 0 32 32"><use href="#tGridBase"/></svg>
<svg class="ic" style="left:711px;top:83px;" width="32" height="32" viewBox="0 0 32 32"><use href="#oDown"/></svg>
<svg class="ic" style="left:749px;top:83px;" width="32" height="32" viewBox="0 0 32 32"><use href="#tGridBase"/></svg>
<svg class="ic" style="left:749px;top:83px;" width="32" height="32" viewBox="0 0 32 32"><use href="#oX"/></svg>
<div class="btn" style="left:1510px;top:122px;width:25px;height:24px"></div>
<svg class="ic" style="left:1510px;top:122px" width="25" height="24"><path d="M12.5 3.5L14.2 3.8L14.8 6.2L16.6 7L18.7 5.7L20 7L18.7 9.1L19.5 10.9L21.9 11.5V13.3L19.5 13.9L18.7 15.7L20 17.8L18.7 19.1L16.6 17.8L14.8 18.6L14.2 21H11.9L11.3 18.6L9.5 17.8L7.4 19.1L6.1 17.8L7.4 15.7L6.6 13.9L4.2 13.3V11.5L6.6 10.9L7.4 9.1L6.1 7L7.4 5.7L9.5 7L11.3 6.2L11.9 3.8Z" fill="#3a3a3a"/><circle cx="13" cy="12.4" r="3" fill="#e8e8ec"/></svg>
<div class="btn" style="left:4px;top:937px;width:38px;height:41px"></div>
<svg class="ic" style="left:10px;top:941px;" width="28" height="30" viewBox="0 0 32 32"><use href="#tInfo"/></svg>
<div class="btn" style="left:46px;top:937px;width:40px;height:41px"></div>
<div class="a" style="left:52px;top:944px;width:24px;height:24px;border-radius:12px;background:radial-gradient(circle at 60% 30%,#8ae08a,#0a8a0a 55%,#046004)"></div>
<svg class="ic" style="left:61px;top:951px;" width="30" height="30" viewBox="0 0 32 32"><use href="#tDoc"/></svg>
<div class="btn" style="left:90px;top:937px;width:40px;height:41px"></div>
<svg class="ic" style="left:95px;top:942px;color:#a070c8" width="31" height="31" viewBox="0 0 32 32"><use href="#tFloppy"/></svg>
<svg class="ic" style="left:104.5px;top:951px;" width="30" height="30" viewBox="0 0 32 32"><use href="#tDoc"/></svg>
<div class="btn" style="left:420px;top:937px;width:79px;height:41px"></div>
<svg class="ic" style="left:426px;top:942px" width="30" height="32" viewBox="0 0 32 32"><use href="#tPencil"/></svg>
<div class="t" style="left:459px;top:951.8px;font-size:12px;font-weight:normal;font-style:normal;color:#000;">Ctrl+E</div>
<div class="btn" style="left:514px;top:956px;width:23px;height:23px"></div>
<svg class="ic" style="left:518px;top:960px" width="15" height="15" viewBox="0 0 16 16"><use href="#bPlus"/></svg>
<div class="btn" style="left:674px;top:956px;width:23px;height:23px"></div>
<svg class="ic" style="left:677px;top:961px" width="17" height="14" viewBox="0 0 16 14"><use href="#bArrL"/></svg>
<div class="btn" style="left:702px;top:956px;width:23px;height:23px"></div>
<svg class="ic" style="left:705px;top:961px" width="17" height="14" viewBox="0 0 16 14"><use href="#bArrR"/></svg>
<div class="btn" style="left:865px;top:956px;width:23px;height:23px"></div>
<svg class="ic" style="left:869px;top:960px" width="15" height="15" viewBox="0 0 16 16"><use href="#bX"/></svg>
<div class="btn" style="left:903.5px;top:956px;width:23px;height:23px"></div>
<svg class="ic" style="left:907.5px;top:960px" width="15" height="15" viewBox="0 0 16 16"><use href="#bPlus"/></svg>
<div class="btn" style="left:1066px;top:956px;width:23px;height:23px"></div>
<svg class="ic" style="left:1069px;top:961px" width="17" height="14" viewBox="0 0 16 14"><use href="#bArrL"/></svg>
<div class="btn" style="left:1094px;top:956px;width:23px;height:23px"></div>
<svg class="ic" style="left:1097px;top:961px" width="17" height="14" viewBox="0 0 16 14"><use href="#bArrR"/></svg>
<div class="btn" style="left:1257px;top:956px;width:23px;height:23px"></div>
<svg class="ic" style="left:1261px;top:960px" width="15" height="15" viewBox="0 0 16 16"><use href="#bX"/></svg>
<div class="btn" style="left:1296px;top:956px;width:23px;height:23px"></div>
<svg class="ic" style="left:1300px;top:960px" width="15" height="15" viewBox="0 0 16 16"><use href="#bPlus"/></svg>
<div class="btn" style="left:1460px;top:956px;width:23px;height:23px"></div>
<svg class="ic" style="left:1463px;top:961px" width="17" height="14" viewBox="0 0 16 14"><use href="#bArrL"/></svg>
<div class="btn" style="left:1487px;top:956px;width:23px;height:23px"></div>
<svg class="ic" style="left:1490px;top:961px" width="17" height="14" viewBox="0 0 16 14"><use href="#bArrR"/></svg>
<div class="btn" style="left:1651px;top:956px;width:23px;height:23px"></div>
<svg class="ic" style="left:1655px;top:960px" width="15" height="15" viewBox="0 0 16 16"><use href="#bX"/></svg>
<div class="a" style="left:0px;top:984px;width:1672px;height:26px;background:#f3f3f6"></div>
<div class="t" style="left:9px;top:991.2px;font-size:11.6px;font-weight:normal;font-style:normal;color:#000;letter-spacing:0px">Verbindungsaufbau zur MEG32</div>
<div class="t" style="left:185px;top:990.8px;font-size:12px;font-weight:normal;font-style:italic;color:#f00000;">Fertig</div>
<div class="a" style="left:1405px;top:988px;width:1px;height:20px;background:#c9c9da"></div>
<div class="a" style="left:1562px;top:988px;width:1px;height:20px;background:#c9c9da"></div>
<svg class="ic" style="left:1413px;top:987px" width="18" height="20" viewBox="0 0 18 20"><circle cx="8" cy="5" r="4" fill="#c89070"/><path d="M5 3C6 0 11 0 12 3Z" fill="#5a3a2a"/><path d="M2 19C2 12 4 10 8 10S14 12 14 19Z" fill="#6a8ab8"/><path d="M10 19L13 11L17 19Z" fill="#f04020"/></svg>
<div class="t" style="left:1435px;top:990.6px;font-size:12.3px;font-weight:normal;font-style:normal;color:#000;">Administrator (admin)</div>
<div class="t" style="left:1572px;top:990.8px;font-size:12px;font-weight:normal;font-style:normal;color:#000;letter-spacing:-0.62px">08.03.2018 13:08:24</div>
</body></html>
